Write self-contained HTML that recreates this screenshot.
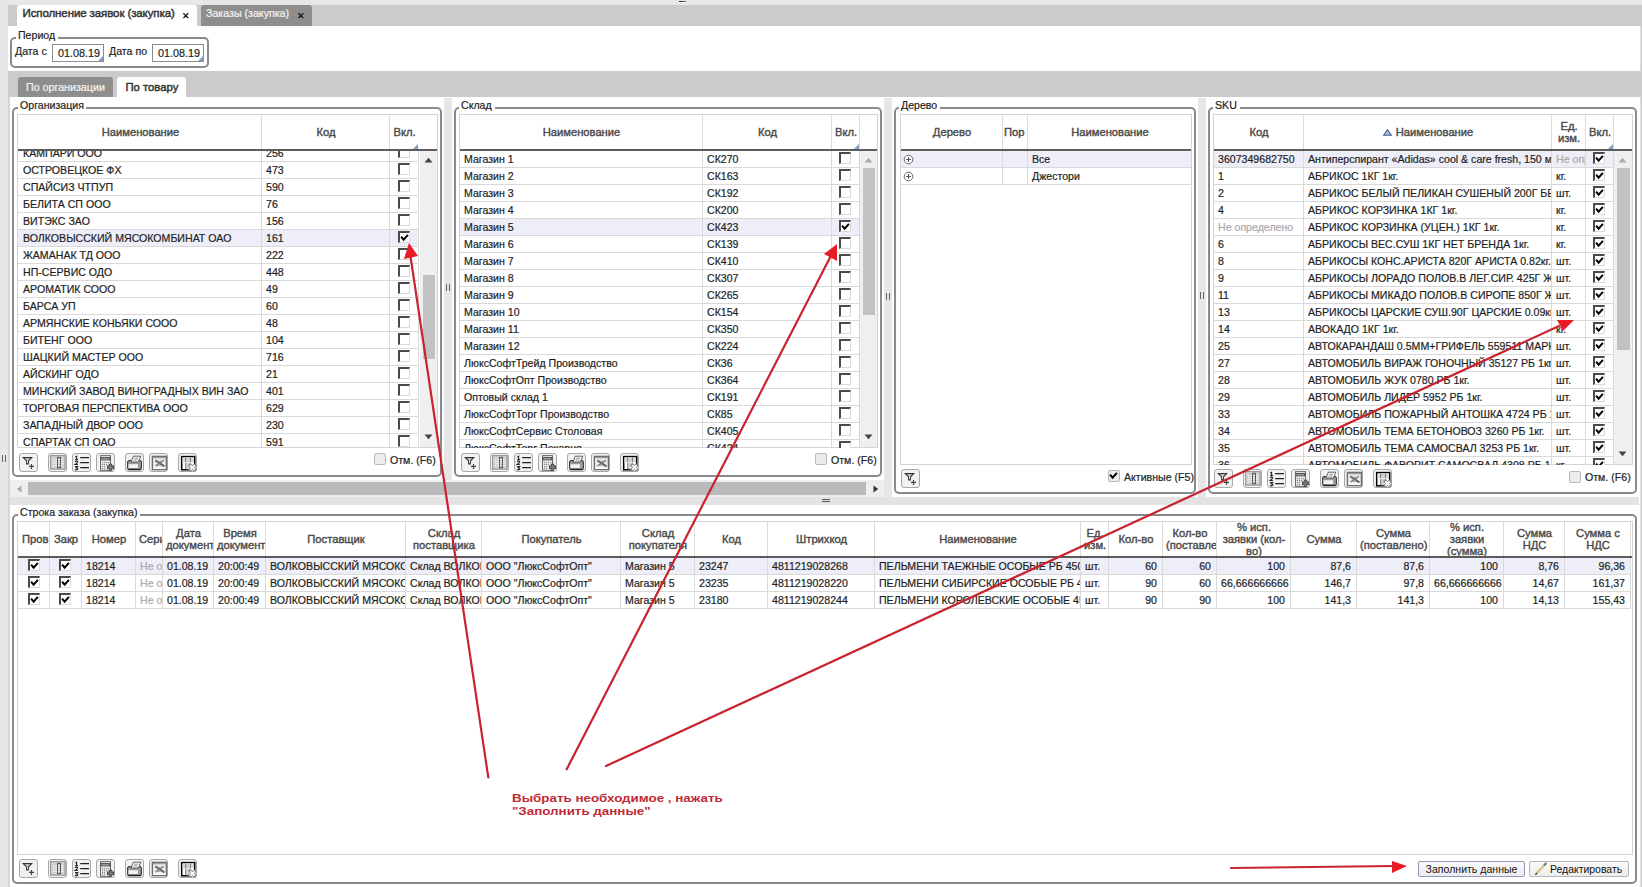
<!DOCTYPE html>
<html><head><meta charset="utf-8"><title>UI</title><style>
*{margin:0;padding:0;box-sizing:border-box}
html,body{width:1642px;height:887px;overflow:hidden;background:#fff;font-family:"Liberation Sans",sans-serif;font-size:10.6px;color:#1e1e1e;position:relative}
.c,.t,.lg{-webkit-text-stroke:0.2px currentColor}
.a{position:absolute}
.t{white-space:nowrap}
.c{white-space:nowrap;overflow:hidden;padding:0 5px;line-height:16px}
.tab1{background:#fff;border-radius:3px 3px 0 0}
.tab2{background:#8e8e8e;border-radius:3px 3px 0 0}
.x{font-size:9px;font-weight:bold;color:#111;line-height:9px;margin-top:1px}
.fs{border:2px solid #8a8a8a;border-radius:5px}
.lg{background:#fff;font-size:10.6px;line-height:12px;padding-left:2px;white-space:nowrap;color:#1e1e1e}
.inp{border:1px solid #8d8d8d;background:#fff}
.inp:after{content:"";position:absolute;right:0;bottom:0;border-style:solid;border-width:0 0 5px 5px;border-color:transparent transparent #7e9fc4 transparent}
.grid{border:1px solid #d4d4d4;background:#fff}
.hd{display:flex;align-items:center;justify-content:center;overflow:hidden}
.hdi{font-weight:normal;font-size:11.2px;-webkit-text-stroke:0.4px #4a4a4a;color:#4a4a4a;text-align:center;line-height:12px;white-space:nowrap;padding:0 2px 0 4px;width:100%;overflow:hidden}
.tri{position:absolute;right:0;bottom:0;border-style:solid;border-width:0 0 5px 5px;border-color:transparent transparent #7e9fc4 transparent}
.sort{display:inline-block;width:9px;height:7px;margin-right:4px;vertical-align:0px}
.cb{width:12px;height:12px;border-top:2px solid #4a4a4a;border-left:2px solid #4a4a4a;border-right:1px solid #dadada;border-bottom:1px solid #dadada;background:#fff}
.fcb{width:12px;height:12px;border:1px solid #b8b8b8;border-radius:2px;background:#ececec}
.tb{width:19px;height:19px;border:1px solid #a8a8a8;border-radius:3px;background:#f1f1f1;line-height:0}
.tb svg{position:absolute;left:-1px;top:-1px}
.hdl{width:4px;height:7px;border-left:1px solid #666;border-right:1px solid #666}
.btn1{border:1px solid #8d9bb8;border-radius:2px;background:linear-gradient(#fafafa,#ececf0);text-align:center;line-height:14px;font-size:10.55px;color:#111}
.btn2{border:1px solid #b5b5b5;border-radius:2px;background:linear-gradient(#fafafa,#ededed);line-height:14px;font-size:10.45px;color:#111}
</style></head><body>
<div class="a" style="left:0px;top:0px;width:1642px;height:5px;background:#e7e7e7"></div>
<div class="a" style="left:0px;top:0px;width:8px;height:887px;background:#e7e7e7"></div>
<div class="a" style="left:8px;top:5px;width:1634px;height:21px;background:#cbcbcb"></div>
<div class="a" style="left:8px;top:71px;width:1634px;height:26px;background:#cbcbcb"></div>
<div class="a" style="left:8px;top:97px;width:2px;height:790px;background:#d6d6d6"></div>
<div class="a" style="left:1640px;top:26px;width:1px;height:45px;background:#e2e2e2"></div>
<div class="a" style="left:1641px;top:26px;width:1px;height:45px;background:#c9c9c9"></div>
<div class="a" style="left:1640px;top:97px;width:1px;height:790px;background:#e2e2e2"></div>
<div class="a" style="left:1641px;top:97px;width:1px;height:790px;background:#c9c9c9"></div>
<div class="a" style="left:679px;top:1px;width:7px;height:1px;background:linear-gradient(90deg,#222,#777)"></div>
<div class="a" style="left:679px;top:2px;width:7px;height:1px;background:#fff"></div>
<div class="a tab1" style="left:17px;top:5px;width:180px;height:21px"></div>
<div class="a t" style="left:22.5px;top:7px;font-size:11.5px;font-weight:normal;color:#333;-webkit-text-stroke:0.45px #333;letter-spacing:-0.1px">Исполнение заявок (закупка)</div>
<div class="a x" style="left:182px;top:11px">✕</div>
<div class="a tab2" style="left:201px;top:5px;width:111px;height:21px"></div>
<div class="a t" style="left:206px;top:7px;font-size:10.65px;font-weight:normal;color:#f4f4f4;">Заказы (закупка)</div>
<div class="a x" style="left:297px;top:11px">✕</div>
<div class="a fs" style="left:10px;top:37px;width:199px;height:31px"></div>
<div class="a lg" style="left:16px;top:29px;width:42px;">Период</div>
<div class="a t" style="left:15px;top:45px;font-size:10.6px;font-weight:normal;color:#1e1e1e;">Дата с</div>
<div class="a inp" style="left:52px;top:44px;width:52px;height:18px"></div>
<div class="a t" style="left:58px;top:46.5px;font-size:10.8px;font-weight:normal;color:#1e1e1e;">01.08.19</div>
<div class="a t" style="left:109px;top:45px;font-size:10.6px;font-weight:normal;color:#1e1e1e;">Дата по</div>
<div class="a inp" style="left:152px;top:44px;width:52px;height:18px"></div>
<div class="a t" style="left:158px;top:46.5px;font-size:10.8px;font-weight:normal;color:#1e1e1e;">01.08.19</div>
<div class="a tab2" style="left:18px;top:77px;width:95px;height:20px"></div>
<div class="a t" style="left:26px;top:81px;font-size:10.7px;font-weight:normal;color:#f4f4f4;">По организации</div>
<div class="a tab1" style="left:117px;top:77px;width:69px;height:20px"></div>
<div class="a t" style="left:125.5px;top:81px;font-size:11.3px;font-weight:normal;color:#333;-webkit-text-stroke:0.45px #333">По товару</div>
<div class="a" style="left:444px;top:98px;width:8px;height:382px;background:#e6e6e6"></div>
<div class="a" style="left:884px;top:98px;width:8px;height:399px;background:#e6e6e6"></div>
<div class="a" style="left:1198px;top:98px;width:8px;height:399px;background:#e6e6e6"></div>
<div class="a" style="left:10px;top:497px;width:1629px;height:8px;background:#e3e3e3"></div>
<div class="a" style="left:10px;top:480px;width:874px;height:17px;background:#eeeeee"></div>
<div class="a" style="left:28px;top:482px;width:838px;height:13px;background:#bababa"></div>
<div class="a" style="left:16px;top:485px;line-height:0"><svg width="6" height="8"><path d="M5.5 0.5 L0.8 4 L5.5 7.5Z" fill="#aaa"/></svg></div>
<div class="a" style="left:873px;top:485px;line-height:0"><svg width="6" height="8"><path d="M0.5 0.5 L5.2 4 L0.5 7.5Z" fill="#333"/></svg></div>
<div class="a hdl" style="left:2px;top:455px"></div>
<div class="a hdl" style="left:446px;top:284px"></div>
<div class="a hdl" style="left:886px;top:293px"></div>
<div class="a hdl" style="left:1200px;top:292px"></div>
<div class="a" style="left:822px;top:499px;width:8px;height:1px;background:#555"></div><div class="a" style="left:822px;top:501px;width:8px;height:1px;background:#555"></div>
<div class="a fs" style="left:12px;top:107px;width:430px;height:370px"></div>
<div class="a lg" style="left:18px;top:99px;width:68px;">Организация</div>
<div class="a grid" style="left:17px;top:114px;width:421px;height:334px"></div>
<div class="a" style="left:261px;top:115px;width:1px;height:34px;background:#dcdcdc"></div>
<div class="a hd" style="left:18px;top:115px;width:243px;height:34px;"><div class="hdi" style="line-height:12px">Наименование</div></div>
<div class="a" style="left:389px;top:115px;width:1px;height:34px;background:#dcdcdc"></div>
<div class="a hd" style="left:261px;top:115px;width:128px;height:34px;"><div class="hdi" style="line-height:12px">Код</div></div>
<div class="a" style="left:418px;top:115px;width:1px;height:34px;background:#dcdcdc"></div>
<div class="a hd" style="left:389px;top:115px;width:29px;height:34px;"><div class="hdi" style="line-height:12px">Вкл.<span class='tri'></span></div></div>
<div class="a" style="left:18px;top:151px;width:419px;height:297px;overflow:hidden">
<div class="a" style="left:0;top:-6px;width:400px;height:17px;border-bottom:1px solid #d9d9d9;"></div>
<div class="a c" style="left:0px;top:-6px;width:243px;height:16px;text-align:left;color:#1e1e1e">КАМПАРИ ООО</div>
<div class="a c" style="left:243px;top:-6px;width:128px;height:16px;text-align:left;color:#1e1e1e">256</div>
<div class="a cb" style="left:380px;top:-5px"></div>
<div class="a" style="left:243px;top:-6px;width:1px;height:17px;background:#d9d9d9"></div>
<div class="a" style="left:371px;top:-6px;width:1px;height:17px;background:#d9d9d9"></div>
<div class="a" style="left:400px;top:-6px;width:1px;height:17px;background:#d9d9d9"></div>
<div class="a" style="left:0;top:11px;width:400px;height:17px;border-bottom:1px solid #d9d9d9;"></div>
<div class="a c" style="left:0px;top:11px;width:243px;height:16px;text-align:left;color:#1e1e1e">ОСТРОВЕЦКОЕ ФХ</div>
<div class="a c" style="left:243px;top:11px;width:128px;height:16px;text-align:left;color:#1e1e1e">473</div>
<div class="a cb" style="left:380px;top:12px"></div>
<div class="a" style="left:243px;top:11px;width:1px;height:17px;background:#d9d9d9"></div>
<div class="a" style="left:371px;top:11px;width:1px;height:17px;background:#d9d9d9"></div>
<div class="a" style="left:400px;top:11px;width:1px;height:17px;background:#d9d9d9"></div>
<div class="a" style="left:0;top:28px;width:400px;height:17px;border-bottom:1px solid #d9d9d9;"></div>
<div class="a c" style="left:0px;top:28px;width:243px;height:16px;text-align:left;color:#1e1e1e">СПАЙСИЗ ЧТПУП</div>
<div class="a c" style="left:243px;top:28px;width:128px;height:16px;text-align:left;color:#1e1e1e">590</div>
<div class="a cb" style="left:380px;top:29px"></div>
<div class="a" style="left:243px;top:28px;width:1px;height:17px;background:#d9d9d9"></div>
<div class="a" style="left:371px;top:28px;width:1px;height:17px;background:#d9d9d9"></div>
<div class="a" style="left:400px;top:28px;width:1px;height:17px;background:#d9d9d9"></div>
<div class="a" style="left:0;top:45px;width:400px;height:17px;border-bottom:1px solid #d9d9d9;"></div>
<div class="a c" style="left:0px;top:45px;width:243px;height:16px;text-align:left;color:#1e1e1e">БЕЛИТА СП ООО</div>
<div class="a c" style="left:243px;top:45px;width:128px;height:16px;text-align:left;color:#1e1e1e">76</div>
<div class="a cb" style="left:380px;top:46px"></div>
<div class="a" style="left:243px;top:45px;width:1px;height:17px;background:#d9d9d9"></div>
<div class="a" style="left:371px;top:45px;width:1px;height:17px;background:#d9d9d9"></div>
<div class="a" style="left:400px;top:45px;width:1px;height:17px;background:#d9d9d9"></div>
<div class="a" style="left:0;top:62px;width:400px;height:17px;border-bottom:1px solid #d9d9d9;"></div>
<div class="a c" style="left:0px;top:62px;width:243px;height:16px;text-align:left;color:#1e1e1e">ВИТЭКС ЗАО</div>
<div class="a c" style="left:243px;top:62px;width:128px;height:16px;text-align:left;color:#1e1e1e">156</div>
<div class="a cb" style="left:380px;top:63px"></div>
<div class="a" style="left:243px;top:62px;width:1px;height:17px;background:#d9d9d9"></div>
<div class="a" style="left:371px;top:62px;width:1px;height:17px;background:#d9d9d9"></div>
<div class="a" style="left:400px;top:62px;width:1px;height:17px;background:#d9d9d9"></div>
<div class="a" style="left:0;top:79px;width:400px;height:17px;border-bottom:1px solid #d9d9d9;background:#eeeef9;"></div>
<div class="a c" style="left:0px;top:79px;width:243px;height:16px;text-align:left;color:#1e1e1e">ВОЛКОВЫССКИЙ МЯСОКОМБИНАТ ОАО</div>
<div class="a c" style="left:243px;top:79px;width:128px;height:16px;text-align:left;color:#1e1e1e">161</div>
<div class="a cb" style="left:380px;top:80px"><svg width="9" height="9" viewBox="0 0 9 9" style="position:absolute;left:0px;top:0px;overflow:visible"><path d="M1.1 3.7 L3.6 6.7 L7.9 1.9" stroke="#000" stroke-width="2" fill="none"/></svg></div>
<div class="a" style="left:243px;top:79px;width:1px;height:17px;background:#d9d9d9"></div>
<div class="a" style="left:371px;top:79px;width:1px;height:17px;background:#d9d9d9"></div>
<div class="a" style="left:400px;top:79px;width:1px;height:17px;background:#d9d9d9"></div>
<div class="a" style="left:0;top:96px;width:400px;height:17px;border-bottom:1px solid #d9d9d9;"></div>
<div class="a c" style="left:0px;top:96px;width:243px;height:16px;text-align:left;color:#1e1e1e">ЖАМАНАК ТД ООО</div>
<div class="a c" style="left:243px;top:96px;width:128px;height:16px;text-align:left;color:#1e1e1e">222</div>
<div class="a cb" style="left:380px;top:97px"></div>
<div class="a" style="left:243px;top:96px;width:1px;height:17px;background:#d9d9d9"></div>
<div class="a" style="left:371px;top:96px;width:1px;height:17px;background:#d9d9d9"></div>
<div class="a" style="left:400px;top:96px;width:1px;height:17px;background:#d9d9d9"></div>
<div class="a" style="left:0;top:113px;width:400px;height:17px;border-bottom:1px solid #d9d9d9;"></div>
<div class="a c" style="left:0px;top:113px;width:243px;height:16px;text-align:left;color:#1e1e1e">НП-СЕРВИС ОДО</div>
<div class="a c" style="left:243px;top:113px;width:128px;height:16px;text-align:left;color:#1e1e1e">448</div>
<div class="a cb" style="left:380px;top:114px"></div>
<div class="a" style="left:243px;top:113px;width:1px;height:17px;background:#d9d9d9"></div>
<div class="a" style="left:371px;top:113px;width:1px;height:17px;background:#d9d9d9"></div>
<div class="a" style="left:400px;top:113px;width:1px;height:17px;background:#d9d9d9"></div>
<div class="a" style="left:0;top:130px;width:400px;height:17px;border-bottom:1px solid #d9d9d9;"></div>
<div class="a c" style="left:0px;top:130px;width:243px;height:16px;text-align:left;color:#1e1e1e">АРОМАТИК СООО</div>
<div class="a c" style="left:243px;top:130px;width:128px;height:16px;text-align:left;color:#1e1e1e">49</div>
<div class="a cb" style="left:380px;top:131px"></div>
<div class="a" style="left:243px;top:130px;width:1px;height:17px;background:#d9d9d9"></div>
<div class="a" style="left:371px;top:130px;width:1px;height:17px;background:#d9d9d9"></div>
<div class="a" style="left:400px;top:130px;width:1px;height:17px;background:#d9d9d9"></div>
<div class="a" style="left:0;top:147px;width:400px;height:17px;border-bottom:1px solid #d9d9d9;"></div>
<div class="a c" style="left:0px;top:147px;width:243px;height:16px;text-align:left;color:#1e1e1e">БАРСА УП</div>
<div class="a c" style="left:243px;top:147px;width:128px;height:16px;text-align:left;color:#1e1e1e">60</div>
<div class="a cb" style="left:380px;top:148px"></div>
<div class="a" style="left:243px;top:147px;width:1px;height:17px;background:#d9d9d9"></div>
<div class="a" style="left:371px;top:147px;width:1px;height:17px;background:#d9d9d9"></div>
<div class="a" style="left:400px;top:147px;width:1px;height:17px;background:#d9d9d9"></div>
<div class="a" style="left:0;top:164px;width:400px;height:17px;border-bottom:1px solid #d9d9d9;"></div>
<div class="a c" style="left:0px;top:164px;width:243px;height:16px;text-align:left;color:#1e1e1e">АРМЯНСКИЕ КОНЬЯКИ СООО</div>
<div class="a c" style="left:243px;top:164px;width:128px;height:16px;text-align:left;color:#1e1e1e">48</div>
<div class="a cb" style="left:380px;top:165px"></div>
<div class="a" style="left:243px;top:164px;width:1px;height:17px;background:#d9d9d9"></div>
<div class="a" style="left:371px;top:164px;width:1px;height:17px;background:#d9d9d9"></div>
<div class="a" style="left:400px;top:164px;width:1px;height:17px;background:#d9d9d9"></div>
<div class="a" style="left:0;top:181px;width:400px;height:17px;border-bottom:1px solid #d9d9d9;"></div>
<div class="a c" style="left:0px;top:181px;width:243px;height:16px;text-align:left;color:#1e1e1e">БИТЕНГ ООО</div>
<div class="a c" style="left:243px;top:181px;width:128px;height:16px;text-align:left;color:#1e1e1e">104</div>
<div class="a cb" style="left:380px;top:182px"></div>
<div class="a" style="left:243px;top:181px;width:1px;height:17px;background:#d9d9d9"></div>
<div class="a" style="left:371px;top:181px;width:1px;height:17px;background:#d9d9d9"></div>
<div class="a" style="left:400px;top:181px;width:1px;height:17px;background:#d9d9d9"></div>
<div class="a" style="left:0;top:198px;width:400px;height:17px;border-bottom:1px solid #d9d9d9;"></div>
<div class="a c" style="left:0px;top:198px;width:243px;height:16px;text-align:left;color:#1e1e1e">ШАЦКИЙ МАСТЕР ООО</div>
<div class="a c" style="left:243px;top:198px;width:128px;height:16px;text-align:left;color:#1e1e1e">716</div>
<div class="a cb" style="left:380px;top:199px"></div>
<div class="a" style="left:243px;top:198px;width:1px;height:17px;background:#d9d9d9"></div>
<div class="a" style="left:371px;top:198px;width:1px;height:17px;background:#d9d9d9"></div>
<div class="a" style="left:400px;top:198px;width:1px;height:17px;background:#d9d9d9"></div>
<div class="a" style="left:0;top:215px;width:400px;height:17px;border-bottom:1px solid #d9d9d9;"></div>
<div class="a c" style="left:0px;top:215px;width:243px;height:16px;text-align:left;color:#1e1e1e">АЙСКИНГ ОДО</div>
<div class="a c" style="left:243px;top:215px;width:128px;height:16px;text-align:left;color:#1e1e1e">21</div>
<div class="a cb" style="left:380px;top:216px"></div>
<div class="a" style="left:243px;top:215px;width:1px;height:17px;background:#d9d9d9"></div>
<div class="a" style="left:371px;top:215px;width:1px;height:17px;background:#d9d9d9"></div>
<div class="a" style="left:400px;top:215px;width:1px;height:17px;background:#d9d9d9"></div>
<div class="a" style="left:0;top:232px;width:400px;height:17px;border-bottom:1px solid #d9d9d9;"></div>
<div class="a c" style="left:0px;top:232px;width:243px;height:16px;text-align:left;color:#1e1e1e">МИНСКИЙ ЗАВОД ВИНОГРАДНЫХ ВИН ЗАО</div>
<div class="a c" style="left:243px;top:232px;width:128px;height:16px;text-align:left;color:#1e1e1e">401</div>
<div class="a cb" style="left:380px;top:233px"></div>
<div class="a" style="left:243px;top:232px;width:1px;height:17px;background:#d9d9d9"></div>
<div class="a" style="left:371px;top:232px;width:1px;height:17px;background:#d9d9d9"></div>
<div class="a" style="left:400px;top:232px;width:1px;height:17px;background:#d9d9d9"></div>
<div class="a" style="left:0;top:249px;width:400px;height:17px;border-bottom:1px solid #d9d9d9;"></div>
<div class="a c" style="left:0px;top:249px;width:243px;height:16px;text-align:left;color:#1e1e1e">ТОРГОВАЯ ПЕРСПЕКТИВА ООО</div>
<div class="a c" style="left:243px;top:249px;width:128px;height:16px;text-align:left;color:#1e1e1e">629</div>
<div class="a cb" style="left:380px;top:250px"></div>
<div class="a" style="left:243px;top:249px;width:1px;height:17px;background:#d9d9d9"></div>
<div class="a" style="left:371px;top:249px;width:1px;height:17px;background:#d9d9d9"></div>
<div class="a" style="left:400px;top:249px;width:1px;height:17px;background:#d9d9d9"></div>
<div class="a" style="left:0;top:266px;width:400px;height:17px;border-bottom:1px solid #d9d9d9;"></div>
<div class="a c" style="left:0px;top:266px;width:243px;height:16px;text-align:left;color:#1e1e1e">ЗАПАДНЫЙ ДВОР ООО</div>
<div class="a c" style="left:243px;top:266px;width:128px;height:16px;text-align:left;color:#1e1e1e">230</div>
<div class="a cb" style="left:380px;top:267px"></div>
<div class="a" style="left:243px;top:266px;width:1px;height:17px;background:#d9d9d9"></div>
<div class="a" style="left:371px;top:266px;width:1px;height:17px;background:#d9d9d9"></div>
<div class="a" style="left:400px;top:266px;width:1px;height:17px;background:#d9d9d9"></div>
<div class="a" style="left:0;top:283px;width:400px;height:17px;border-bottom:1px solid #d9d9d9;"></div>
<div class="a c" style="left:0px;top:283px;width:243px;height:16px;text-align:left;color:#1e1e1e">СПАРТАК СП ОАО</div>
<div class="a c" style="left:243px;top:283px;width:128px;height:16px;text-align:left;color:#1e1e1e">591</div>
<div class="a cb" style="left:380px;top:284px"></div>
<div class="a" style="left:243px;top:283px;width:1px;height:17px;background:#d9d9d9"></div>
<div class="a" style="left:371px;top:283px;width:1px;height:17px;background:#d9d9d9"></div>
<div class="a" style="left:400px;top:283px;width:1px;height:17px;background:#d9d9d9"></div>
<div class="a" style="left:0;top:300px;width:400px;height:17px;border-bottom:1px solid #d9d9d9;"></div>
<div class="a cb" style="left:380px;top:301px"></div>
<div class="a" style="left:243px;top:300px;width:1px;height:17px;background:#d9d9d9"></div>
<div class="a" style="left:371px;top:300px;width:1px;height:17px;background:#d9d9d9"></div>
<div class="a" style="left:400px;top:300px;width:1px;height:17px;background:#d9d9d9"></div>
</div>
<div class="a" style="left:18px;top:149px;width:419px;height:2px;background:#5c5c5c"></div>
<div class="a" style="left:418px;top:115px;width:19px;height:34px;background:#fff"></div>
<div class="a" style="left:420px;top:151px;width:17px;height:296px;background:#efefef"></div>
<div class="a" style="left:424px;top:157px;line-height:0"><svg width="9" height="6" viewBox="0 0 9 6"><path d="M0.5 5.5 L4.5 0.8 L8.5 5.5 Z" fill="#444"/></svg></div>
<div class="a" style="left:424px;top:434px;line-height:0"><svg width="9" height="6" viewBox="0 0 9 6"><path d="M0.5 0.5 L4.5 5.2 L8.5 0.5 Z" fill="#444"/></svg></div>
<div class="a" style="left:423px;top:275px;width:12px;height:84px;background:#c2c2c2"></div>
<div class="a tb" style="left:19px;top:453px"><svg width="19" height="20" viewBox="0 0 19 20"><path d="M3 4 H14 L9.9 8.3 V11.6 H7.1 V8.3 Z" fill="#333"/><path d="M5.6 5.2 H11.4 L9 7.6 V10.2 H8 V7.6 Z" fill="#c9d6d6"/><path d="M12.5 11 V15.9 M10 13.4 H15" stroke="#444" stroke-width="1.2"/></svg></div>
<div class="a tb" style="left:48px;top:453px"><svg width="19" height="20" viewBox="0 0 19 20"><rect x="2.8" y="2.8" width="14.2" height="13.2" fill="#fff" stroke="#8a8a8a" stroke-width="1.3"/><rect x="4.2" y="4.2" width="11.6" height="10.6" fill="#c8c8c8"/><g fill="#f4f4f4"><rect x="5" y="6" width="1.6" height="1.2"/><rect x="7.2" y="6" width="1.8" height="1.2"/><rect x="10" y="6" width="1.8" height="1.2"/><rect x="12.6" y="6" width="2.4" height="1.2"/><rect x="5" y="8" width="1.6" height="1.2"/><rect x="7.2" y="8" width="1.8" height="1.2"/><rect x="10" y="8" width="1.8" height="1.2"/><rect x="12.6" y="8" width="2.4" height="1.2"/><rect x="5" y="10" width="1.6" height="1.2"/><rect x="7.2" y="10" width="1.8" height="1.2"/><rect x="10" y="10" width="1.8" height="1.2"/><rect x="12.6" y="10" width="2.4" height="1.2"/><rect x="5" y="12" width="1.6" height="1.2"/><rect x="7.2" y="12" width="1.8" height="1.2"/><rect x="10" y="12" width="1.8" height="1.2"/><rect x="12.6" y="12" width="2.4" height="1.2"/></g><rect x="9.6" y="4.3" width="2.8" height="10.4" fill="none" stroke="#444" stroke-width="0.9"/></svg></div>
<div class="a tb" style="left:72px;top:453px"><svg width="19" height="20" viewBox="0 0 19 20"><path d="M3.4 4 L4.6 3.2 V6.6 M3.2 6.6 H5.9" stroke="#222" stroke-width="1.1" fill="none"/><path d="M3 8.6 Q4.5 7.6 5.6 8.6 Q5.8 9.8 3.2 11.5 H5.9" stroke="#222" stroke-width="1.1" fill="none"/><path d="M3 13.5 H5.6 L4.2 14.8 Q6 15 5.7 16.2 Q4.6 17.4 3 16.5" stroke="#222" stroke-width="1.1" fill="none"/><path d="M8.2 4.6 H17 M8.2 9.6 H17 M8.2 14.6 H17" stroke="#222" stroke-width="1.2"/></svg></div>
<div class="a tb" style="left:96px;top:453px"><svg width="19" height="20" viewBox="0 0 19 20"><rect x="4.5" y="2.6" width="10" height="14.8" fill="#ececec" stroke="#6a6a6a" stroke-width="1"/><rect x="4.5" y="4" width="10" height="3.4" fill="#555"/><rect x="5.5" y="5" width="7.5" height="1.6" fill="#9a9a9a"/><g fill="#8a8a8a"><rect x="5.9" y="9" width="1.2" height="1.2"/><rect x="7.9" y="9" width="1.2" height="1.2"/><rect x="9.9" y="9" width="1.2" height="1.2"/><rect x="11.9" y="9" width="1.2" height="1.2"/><rect x="5.9" y="11" width="1.2" height="1.2"/><rect x="7.9" y="11" width="1.2" height="1.2"/><rect x="9.9" y="11" width="1.2" height="1.2"/><rect x="5.9" y="13" width="1.2" height="1.2"/><rect x="7.9" y="13" width="1.2" height="1.2"/><rect x="5.9" y="15" width="1.2" height="1.2"/><rect x="7.9" y="15" width="1.2" height="1.2"/></g><path d="M14.5 10.8 V17.8 M11 14.3 H18" stroke="#444" stroke-width="3.4"/><path d="M14.5 11.5 V17.1 M11.7 14.3 H17.3" stroke="#7a7a7a" stroke-width="1.8"/></svg></div>
<div class="a tb" style="left:125px;top:453px"><svg width="19" height="20" viewBox="0 0 19 20"><path d="M2.6 9 Q2.6 7.6 4 7.6 H15 Q16.4 7.6 16.4 9 V15.6 Q16.4 16.8 15 16.8 H4 Q2.6 16.8 2.6 15.6 Z" fill="#9a9a9a" stroke="#333" stroke-width="1"/><path d="M6 9 L8.3 3.2 H15.8 L13.4 9 Z" fill="#f4f4f4" stroke="#555" stroke-width="0.9"/><path d="M9.3 5.3 H13 M8.6 7 H12.2" stroke="#888" stroke-width="0.8"/><rect x="3.5" y="11.2" width="9.5" height="3.8" fill="#f2f2f2"/><path d="M3.2 16.4 H15.8" stroke="#222" stroke-width="1.2"/></svg></div>
<div class="a tb" style="left:149px;top:453px"><svg width="19" height="20" viewBox="0 0 19 20"><rect x="3.4" y="3.4" width="14" height="13.2" fill="#eeeeee" stroke="#6e6e6e" stroke-width="1.4"/><rect x="4.1" y="4.1" width="12.6" height="1.2" fill="#9a9a9a"/><path d="M6.3 7.4 L15.4 13.4" stroke="#666" stroke-width="2"/><path d="M14.8 7.3 L6.6 12.8" stroke="#777" stroke-width="1.4"/><path d="M7.5 8.2 H13.5 M6.5 12.4 H11.5" stroke="#999" stroke-width="0.8"/><rect x="4.1" y="14.6" width="12.6" height="1.3" fill="#fff"/></svg></div>
<div class="a tb" style="left:178px;top:453px"><svg width="19" height="20" viewBox="0 0 19 20"><rect x="3.7" y="3.6" width="13" height="13.2" fill="#fff" stroke="#000" stroke-width="1.5"/><rect x="4.5" y="4.4" width="11.5" height="5" fill="#d8d8d8"/><rect x="8" y="4.4" width="4.4" height="11.8" fill="#cfcfcf"/><path d="M7.6 4.4 V16.2 M12.5 4.4 V16.2" stroke="#777" stroke-width="0.9"/><path d="M4.5 9.6 H16" stroke="#eee" stroke-width="0.8"/><rect x="11" y="11" width="7" height="7" fill="#fff"/><path d="M12.2 12.2 L16.8 16.8 M16.8 12.2 L12.2 16.8" stroke="#8a8a8a" stroke-width="3.4" stroke-linecap="round"/><path d="M12.3 12.3 L16.7 16.7 M16.7 12.3 L12.3 16.7" stroke="#fff" stroke-width="1.8"/></svg></div>
<div class="a fcb" style="left:374px;top:453px"></div>
<div class="a t" style="left:390px;top:454px;font-size:10.6px;font-weight:normal;color:#1e1e1e;">Отм. (F6)</div>
<div class="a fs" style="left:454px;top:107px;width:428px;height:370px"></div>
<div class="a lg" style="left:459px;top:99px;width:36px;">Склад</div>
<div class="a grid" style="left:459px;top:114px;width:419px;height:334px"></div>
<div class="a" style="left:702px;top:115px;width:1px;height:34px;background:#dcdcdc"></div>
<div class="a hd" style="left:459px;top:115px;width:243px;height:34px;"><div class="hdi" style="line-height:12px">Наименование</div></div>
<div class="a" style="left:831px;top:115px;width:1px;height:34px;background:#dcdcdc"></div>
<div class="a hd" style="left:702px;top:115px;width:129px;height:34px;"><div class="hdi" style="line-height:12px">Код</div></div>
<div class="a" style="left:859px;top:115px;width:1px;height:34px;background:#dcdcdc"></div>
<div class="a hd" style="left:831px;top:115px;width:28px;height:34px;"><div class="hdi" style="line-height:12px">Вкл.<span class='tri'></span></div></div>
<div class="a" style="left:460px;top:151px;width:417px;height:297px;overflow:hidden">
<div class="a" style="left:0;top:0px;width:399px;height:17px;border-bottom:1px solid #d9d9d9;"></div>
<div class="a c" style="left:-1px;top:0px;width:243px;height:16px;text-align:left;color:#1e1e1e">Магазин 1</div>
<div class="a c" style="left:242px;top:0px;width:129px;height:16px;text-align:left;color:#1e1e1e">СК270</div>
<div class="a cb" style="left:379px;top:1px"></div>
<div class="a" style="left:242px;top:0px;width:1px;height:17px;background:#d9d9d9"></div>
<div class="a" style="left:371px;top:0px;width:1px;height:17px;background:#d9d9d9"></div>
<div class="a" style="left:399px;top:0px;width:1px;height:17px;background:#d9d9d9"></div>
<div class="a" style="left:0;top:17px;width:399px;height:17px;border-bottom:1px solid #d9d9d9;"></div>
<div class="a c" style="left:-1px;top:17px;width:243px;height:16px;text-align:left;color:#1e1e1e">Магазин 2</div>
<div class="a c" style="left:242px;top:17px;width:129px;height:16px;text-align:left;color:#1e1e1e">СК163</div>
<div class="a cb" style="left:379px;top:18px"></div>
<div class="a" style="left:242px;top:17px;width:1px;height:17px;background:#d9d9d9"></div>
<div class="a" style="left:371px;top:17px;width:1px;height:17px;background:#d9d9d9"></div>
<div class="a" style="left:399px;top:17px;width:1px;height:17px;background:#d9d9d9"></div>
<div class="a" style="left:0;top:34px;width:399px;height:17px;border-bottom:1px solid #d9d9d9;"></div>
<div class="a c" style="left:-1px;top:34px;width:243px;height:16px;text-align:left;color:#1e1e1e">Магазин 3</div>
<div class="a c" style="left:242px;top:34px;width:129px;height:16px;text-align:left;color:#1e1e1e">СК192</div>
<div class="a cb" style="left:379px;top:35px"></div>
<div class="a" style="left:242px;top:34px;width:1px;height:17px;background:#d9d9d9"></div>
<div class="a" style="left:371px;top:34px;width:1px;height:17px;background:#d9d9d9"></div>
<div class="a" style="left:399px;top:34px;width:1px;height:17px;background:#d9d9d9"></div>
<div class="a" style="left:0;top:51px;width:399px;height:17px;border-bottom:1px solid #d9d9d9;"></div>
<div class="a c" style="left:-1px;top:51px;width:243px;height:16px;text-align:left;color:#1e1e1e">Магазин 4</div>
<div class="a c" style="left:242px;top:51px;width:129px;height:16px;text-align:left;color:#1e1e1e">СК200</div>
<div class="a cb" style="left:379px;top:52px"></div>
<div class="a" style="left:242px;top:51px;width:1px;height:17px;background:#d9d9d9"></div>
<div class="a" style="left:371px;top:51px;width:1px;height:17px;background:#d9d9d9"></div>
<div class="a" style="left:399px;top:51px;width:1px;height:17px;background:#d9d9d9"></div>
<div class="a" style="left:0;top:68px;width:399px;height:17px;border-bottom:1px solid #d9d9d9;background:#eeeef9;"></div>
<div class="a c" style="left:-1px;top:68px;width:243px;height:16px;text-align:left;color:#1e1e1e">Магазин 5</div>
<div class="a c" style="left:242px;top:68px;width:129px;height:16px;text-align:left;color:#1e1e1e">СК423</div>
<div class="a cb" style="left:379px;top:69px"><svg width="9" height="9" viewBox="0 0 9 9" style="position:absolute;left:0px;top:0px;overflow:visible"><path d="M1.1 3.7 L3.6 6.7 L7.9 1.9" stroke="#000" stroke-width="2" fill="none"/></svg></div>
<div class="a" style="left:242px;top:68px;width:1px;height:17px;background:#d9d9d9"></div>
<div class="a" style="left:371px;top:68px;width:1px;height:17px;background:#d9d9d9"></div>
<div class="a" style="left:399px;top:68px;width:1px;height:17px;background:#d9d9d9"></div>
<div class="a" style="left:0;top:85px;width:399px;height:17px;border-bottom:1px solid #d9d9d9;"></div>
<div class="a c" style="left:-1px;top:85px;width:243px;height:16px;text-align:left;color:#1e1e1e">Магазин 6</div>
<div class="a c" style="left:242px;top:85px;width:129px;height:16px;text-align:left;color:#1e1e1e">СК139</div>
<div class="a cb" style="left:379px;top:86px"></div>
<div class="a" style="left:242px;top:85px;width:1px;height:17px;background:#d9d9d9"></div>
<div class="a" style="left:371px;top:85px;width:1px;height:17px;background:#d9d9d9"></div>
<div class="a" style="left:399px;top:85px;width:1px;height:17px;background:#d9d9d9"></div>
<div class="a" style="left:0;top:102px;width:399px;height:17px;border-bottom:1px solid #d9d9d9;"></div>
<div class="a c" style="left:-1px;top:102px;width:243px;height:16px;text-align:left;color:#1e1e1e">Магазин 7</div>
<div class="a c" style="left:242px;top:102px;width:129px;height:16px;text-align:left;color:#1e1e1e">СК410</div>
<div class="a cb" style="left:379px;top:103px"></div>
<div class="a" style="left:242px;top:102px;width:1px;height:17px;background:#d9d9d9"></div>
<div class="a" style="left:371px;top:102px;width:1px;height:17px;background:#d9d9d9"></div>
<div class="a" style="left:399px;top:102px;width:1px;height:17px;background:#d9d9d9"></div>
<div class="a" style="left:0;top:119px;width:399px;height:17px;border-bottom:1px solid #d9d9d9;"></div>
<div class="a c" style="left:-1px;top:119px;width:243px;height:16px;text-align:left;color:#1e1e1e">Магазин 8</div>
<div class="a c" style="left:242px;top:119px;width:129px;height:16px;text-align:left;color:#1e1e1e">СК307</div>
<div class="a cb" style="left:379px;top:120px"></div>
<div class="a" style="left:242px;top:119px;width:1px;height:17px;background:#d9d9d9"></div>
<div class="a" style="left:371px;top:119px;width:1px;height:17px;background:#d9d9d9"></div>
<div class="a" style="left:399px;top:119px;width:1px;height:17px;background:#d9d9d9"></div>
<div class="a" style="left:0;top:136px;width:399px;height:17px;border-bottom:1px solid #d9d9d9;"></div>
<div class="a c" style="left:-1px;top:136px;width:243px;height:16px;text-align:left;color:#1e1e1e">Магазин 9</div>
<div class="a c" style="left:242px;top:136px;width:129px;height:16px;text-align:left;color:#1e1e1e">СК265</div>
<div class="a cb" style="left:379px;top:137px"></div>
<div class="a" style="left:242px;top:136px;width:1px;height:17px;background:#d9d9d9"></div>
<div class="a" style="left:371px;top:136px;width:1px;height:17px;background:#d9d9d9"></div>
<div class="a" style="left:399px;top:136px;width:1px;height:17px;background:#d9d9d9"></div>
<div class="a" style="left:0;top:153px;width:399px;height:17px;border-bottom:1px solid #d9d9d9;"></div>
<div class="a c" style="left:-1px;top:153px;width:243px;height:16px;text-align:left;color:#1e1e1e">Магазин 10</div>
<div class="a c" style="left:242px;top:153px;width:129px;height:16px;text-align:left;color:#1e1e1e">СК154</div>
<div class="a cb" style="left:379px;top:154px"></div>
<div class="a" style="left:242px;top:153px;width:1px;height:17px;background:#d9d9d9"></div>
<div class="a" style="left:371px;top:153px;width:1px;height:17px;background:#d9d9d9"></div>
<div class="a" style="left:399px;top:153px;width:1px;height:17px;background:#d9d9d9"></div>
<div class="a" style="left:0;top:170px;width:399px;height:17px;border-bottom:1px solid #d9d9d9;"></div>
<div class="a c" style="left:-1px;top:170px;width:243px;height:16px;text-align:left;color:#1e1e1e">Магазин 11</div>
<div class="a c" style="left:242px;top:170px;width:129px;height:16px;text-align:left;color:#1e1e1e">СК350</div>
<div class="a cb" style="left:379px;top:171px"></div>
<div class="a" style="left:242px;top:170px;width:1px;height:17px;background:#d9d9d9"></div>
<div class="a" style="left:371px;top:170px;width:1px;height:17px;background:#d9d9d9"></div>
<div class="a" style="left:399px;top:170px;width:1px;height:17px;background:#d9d9d9"></div>
<div class="a" style="left:0;top:187px;width:399px;height:17px;border-bottom:1px solid #d9d9d9;"></div>
<div class="a c" style="left:-1px;top:187px;width:243px;height:16px;text-align:left;color:#1e1e1e">Магазин 12</div>
<div class="a c" style="left:242px;top:187px;width:129px;height:16px;text-align:left;color:#1e1e1e">СК224</div>
<div class="a cb" style="left:379px;top:188px"></div>
<div class="a" style="left:242px;top:187px;width:1px;height:17px;background:#d9d9d9"></div>
<div class="a" style="left:371px;top:187px;width:1px;height:17px;background:#d9d9d9"></div>
<div class="a" style="left:399px;top:187px;width:1px;height:17px;background:#d9d9d9"></div>
<div class="a" style="left:0;top:204px;width:399px;height:17px;border-bottom:1px solid #d9d9d9;"></div>
<div class="a c" style="left:-1px;top:204px;width:243px;height:16px;text-align:left;color:#1e1e1e">ЛюксСофтТрейд Производство</div>
<div class="a c" style="left:242px;top:204px;width:129px;height:16px;text-align:left;color:#1e1e1e">СК36</div>
<div class="a cb" style="left:379px;top:205px"></div>
<div class="a" style="left:242px;top:204px;width:1px;height:17px;background:#d9d9d9"></div>
<div class="a" style="left:371px;top:204px;width:1px;height:17px;background:#d9d9d9"></div>
<div class="a" style="left:399px;top:204px;width:1px;height:17px;background:#d9d9d9"></div>
<div class="a" style="left:0;top:221px;width:399px;height:17px;border-bottom:1px solid #d9d9d9;"></div>
<div class="a c" style="left:-1px;top:221px;width:243px;height:16px;text-align:left;color:#1e1e1e">ЛюксСофтОпт Производство</div>
<div class="a c" style="left:242px;top:221px;width:129px;height:16px;text-align:left;color:#1e1e1e">СК364</div>
<div class="a cb" style="left:379px;top:222px"></div>
<div class="a" style="left:242px;top:221px;width:1px;height:17px;background:#d9d9d9"></div>
<div class="a" style="left:371px;top:221px;width:1px;height:17px;background:#d9d9d9"></div>
<div class="a" style="left:399px;top:221px;width:1px;height:17px;background:#d9d9d9"></div>
<div class="a" style="left:0;top:238px;width:399px;height:17px;border-bottom:1px solid #d9d9d9;"></div>
<div class="a c" style="left:-1px;top:238px;width:243px;height:16px;text-align:left;color:#1e1e1e">Оптовый склад 1</div>
<div class="a c" style="left:242px;top:238px;width:129px;height:16px;text-align:left;color:#1e1e1e">СК191</div>
<div class="a cb" style="left:379px;top:239px"></div>
<div class="a" style="left:242px;top:238px;width:1px;height:17px;background:#d9d9d9"></div>
<div class="a" style="left:371px;top:238px;width:1px;height:17px;background:#d9d9d9"></div>
<div class="a" style="left:399px;top:238px;width:1px;height:17px;background:#d9d9d9"></div>
<div class="a" style="left:0;top:255px;width:399px;height:17px;border-bottom:1px solid #d9d9d9;"></div>
<div class="a c" style="left:-1px;top:255px;width:243px;height:16px;text-align:left;color:#1e1e1e">ЛюксСофтТорг Производство</div>
<div class="a c" style="left:242px;top:255px;width:129px;height:16px;text-align:left;color:#1e1e1e">СК85</div>
<div class="a cb" style="left:379px;top:256px"></div>
<div class="a" style="left:242px;top:255px;width:1px;height:17px;background:#d9d9d9"></div>
<div class="a" style="left:371px;top:255px;width:1px;height:17px;background:#d9d9d9"></div>
<div class="a" style="left:399px;top:255px;width:1px;height:17px;background:#d9d9d9"></div>
<div class="a" style="left:0;top:272px;width:399px;height:17px;border-bottom:1px solid #d9d9d9;"></div>
<div class="a c" style="left:-1px;top:272px;width:243px;height:16px;text-align:left;color:#1e1e1e">ЛюксСофтСервис Столовая</div>
<div class="a c" style="left:242px;top:272px;width:129px;height:16px;text-align:left;color:#1e1e1e">СК405</div>
<div class="a cb" style="left:379px;top:273px"></div>
<div class="a" style="left:242px;top:272px;width:1px;height:17px;background:#d9d9d9"></div>
<div class="a" style="left:371px;top:272px;width:1px;height:17px;background:#d9d9d9"></div>
<div class="a" style="left:399px;top:272px;width:1px;height:17px;background:#d9d9d9"></div>
<div class="a" style="left:0;top:289px;width:399px;height:17px;border-bottom:1px solid #d9d9d9;"></div>
<div class="a c" style="left:-1px;top:289px;width:243px;height:16px;text-align:left;color:#1e1e1e">ЛюксСофтТорг Пекарня</div>
<div class="a c" style="left:242px;top:289px;width:129px;height:16px;text-align:left;color:#1e1e1e">СК424</div>
<div class="a cb" style="left:379px;top:290px"></div>
<div class="a" style="left:242px;top:289px;width:1px;height:17px;background:#d9d9d9"></div>
<div class="a" style="left:371px;top:289px;width:1px;height:17px;background:#d9d9d9"></div>
<div class="a" style="left:399px;top:289px;width:1px;height:17px;background:#d9d9d9"></div>
</div>
<div class="a" style="left:460px;top:149px;width:417px;height:2px;background:#5c5c5c"></div>
<div class="a" style="left:860px;top:151px;width:17px;height:296px;background:#efefef"></div>
<div class="a" style="left:864px;top:157px;line-height:0"><svg width="9" height="6" viewBox="0 0 9 6"><path d="M0.5 5.5 L4.5 0.8 L8.5 5.5 Z" fill="#aaa"/></svg></div>
<div class="a" style="left:864px;top:434px;line-height:0"><svg width="9" height="6" viewBox="0 0 9 6"><path d="M0.5 0.5 L4.5 5.2 L8.5 0.5 Z" fill="#444"/></svg></div>
<div class="a" style="left:863px;top:168px;width:12px;height:147px;background:#c2c2c2"></div>
<div class="a tb" style="left:461px;top:453px"><svg width="19" height="20" viewBox="0 0 19 20"><path d="M3 4 H14 L9.9 8.3 V11.6 H7.1 V8.3 Z" fill="#333"/><path d="M5.6 5.2 H11.4 L9 7.6 V10.2 H8 V7.6 Z" fill="#c9d6d6"/><path d="M12.5 11 V15.9 M10 13.4 H15" stroke="#444" stroke-width="1.2"/></svg></div>
<div class="a tb" style="left:490px;top:453px"><svg width="19" height="20" viewBox="0 0 19 20"><rect x="2.8" y="2.8" width="14.2" height="13.2" fill="#fff" stroke="#8a8a8a" stroke-width="1.3"/><rect x="4.2" y="4.2" width="11.6" height="10.6" fill="#c8c8c8"/><g fill="#f4f4f4"><rect x="5" y="6" width="1.6" height="1.2"/><rect x="7.2" y="6" width="1.8" height="1.2"/><rect x="10" y="6" width="1.8" height="1.2"/><rect x="12.6" y="6" width="2.4" height="1.2"/><rect x="5" y="8" width="1.6" height="1.2"/><rect x="7.2" y="8" width="1.8" height="1.2"/><rect x="10" y="8" width="1.8" height="1.2"/><rect x="12.6" y="8" width="2.4" height="1.2"/><rect x="5" y="10" width="1.6" height="1.2"/><rect x="7.2" y="10" width="1.8" height="1.2"/><rect x="10" y="10" width="1.8" height="1.2"/><rect x="12.6" y="10" width="2.4" height="1.2"/><rect x="5" y="12" width="1.6" height="1.2"/><rect x="7.2" y="12" width="1.8" height="1.2"/><rect x="10" y="12" width="1.8" height="1.2"/><rect x="12.6" y="12" width="2.4" height="1.2"/></g><rect x="9.6" y="4.3" width="2.8" height="10.4" fill="none" stroke="#444" stroke-width="0.9"/></svg></div>
<div class="a tb" style="left:514px;top:453px"><svg width="19" height="20" viewBox="0 0 19 20"><path d="M3.4 4 L4.6 3.2 V6.6 M3.2 6.6 H5.9" stroke="#222" stroke-width="1.1" fill="none"/><path d="M3 8.6 Q4.5 7.6 5.6 8.6 Q5.8 9.8 3.2 11.5 H5.9" stroke="#222" stroke-width="1.1" fill="none"/><path d="M3 13.5 H5.6 L4.2 14.8 Q6 15 5.7 16.2 Q4.6 17.4 3 16.5" stroke="#222" stroke-width="1.1" fill="none"/><path d="M8.2 4.6 H17 M8.2 9.6 H17 M8.2 14.6 H17" stroke="#222" stroke-width="1.2"/></svg></div>
<div class="a tb" style="left:538px;top:453px"><svg width="19" height="20" viewBox="0 0 19 20"><rect x="4.5" y="2.6" width="10" height="14.8" fill="#ececec" stroke="#6a6a6a" stroke-width="1"/><rect x="4.5" y="4" width="10" height="3.4" fill="#555"/><rect x="5.5" y="5" width="7.5" height="1.6" fill="#9a9a9a"/><g fill="#8a8a8a"><rect x="5.9" y="9" width="1.2" height="1.2"/><rect x="7.9" y="9" width="1.2" height="1.2"/><rect x="9.9" y="9" width="1.2" height="1.2"/><rect x="11.9" y="9" width="1.2" height="1.2"/><rect x="5.9" y="11" width="1.2" height="1.2"/><rect x="7.9" y="11" width="1.2" height="1.2"/><rect x="9.9" y="11" width="1.2" height="1.2"/><rect x="5.9" y="13" width="1.2" height="1.2"/><rect x="7.9" y="13" width="1.2" height="1.2"/><rect x="5.9" y="15" width="1.2" height="1.2"/><rect x="7.9" y="15" width="1.2" height="1.2"/></g><path d="M14.5 10.8 V17.8 M11 14.3 H18" stroke="#444" stroke-width="3.4"/><path d="M14.5 11.5 V17.1 M11.7 14.3 H17.3" stroke="#7a7a7a" stroke-width="1.8"/></svg></div>
<div class="a tb" style="left:567px;top:453px"><svg width="19" height="20" viewBox="0 0 19 20"><path d="M2.6 9 Q2.6 7.6 4 7.6 H15 Q16.4 7.6 16.4 9 V15.6 Q16.4 16.8 15 16.8 H4 Q2.6 16.8 2.6 15.6 Z" fill="#9a9a9a" stroke="#333" stroke-width="1"/><path d="M6 9 L8.3 3.2 H15.8 L13.4 9 Z" fill="#f4f4f4" stroke="#555" stroke-width="0.9"/><path d="M9.3 5.3 H13 M8.6 7 H12.2" stroke="#888" stroke-width="0.8"/><rect x="3.5" y="11.2" width="9.5" height="3.8" fill="#f2f2f2"/><path d="M3.2 16.4 H15.8" stroke="#222" stroke-width="1.2"/></svg></div>
<div class="a tb" style="left:591px;top:453px"><svg width="19" height="20" viewBox="0 0 19 20"><rect x="3.4" y="3.4" width="14" height="13.2" fill="#eeeeee" stroke="#6e6e6e" stroke-width="1.4"/><rect x="4.1" y="4.1" width="12.6" height="1.2" fill="#9a9a9a"/><path d="M6.3 7.4 L15.4 13.4" stroke="#666" stroke-width="2"/><path d="M14.8 7.3 L6.6 12.8" stroke="#777" stroke-width="1.4"/><path d="M7.5 8.2 H13.5 M6.5 12.4 H11.5" stroke="#999" stroke-width="0.8"/><rect x="4.1" y="14.6" width="12.6" height="1.3" fill="#fff"/></svg></div>
<div class="a tb" style="left:620px;top:453px"><svg width="19" height="20" viewBox="0 0 19 20"><rect x="3.7" y="3.6" width="13" height="13.2" fill="#fff" stroke="#000" stroke-width="1.5"/><rect x="4.5" y="4.4" width="11.5" height="5" fill="#d8d8d8"/><rect x="8" y="4.4" width="4.4" height="11.8" fill="#cfcfcf"/><path d="M7.6 4.4 V16.2 M12.5 4.4 V16.2" stroke="#777" stroke-width="0.9"/><path d="M4.5 9.6 H16" stroke="#eee" stroke-width="0.8"/><rect x="11" y="11" width="7" height="7" fill="#fff"/><path d="M12.2 12.2 L16.8 16.8 M16.8 12.2 L12.2 16.8" stroke="#8a8a8a" stroke-width="3.4" stroke-linecap="round"/><path d="M12.3 12.3 L16.7 16.7 M16.7 12.3 L12.3 16.7" stroke="#fff" stroke-width="1.8"/></svg></div>
<div class="a fcb" style="left:815px;top:453px"></div>
<div class="a t" style="left:831px;top:454px;font-size:10.6px;font-weight:normal;color:#1e1e1e;">Отм. (F6)</div>
<div class="a fs" style="left:894px;top:107px;width:302px;height:387px"></div>
<div class="a lg" style="left:899px;top:99px;width:41px;">Дерево</div>
<div class="a grid" style="left:900px;top:114px;width:292px;height:351px"></div>
<div class="a" style="left:1002px;top:115px;width:1px;height:34px;background:#dcdcdc"></div>
<div class="a" style="left:1027px;top:115px;width:1px;height:34px;background:#dcdcdc"></div>
<div class="a hd" style="left:900px;top:115px;width:102px;height:34px"><div class="hdi">Дерево</div></div>
<div class="a hd" style="left:1002px;top:115px;width:25px;height:34px;overflow:hidden"><div class="hdi" style="text-align:left;padding-left:2px">Пор</div></div>
<div class="a hd" style="left:1027px;top:115px;width:164px;height:34px"><div class="hdi">Наименование</div></div>
<div class="a" style="left:901px;top:149px;width:290px;height:2px;background:#5c5c5c"></div>
<div class="a" style="left:901px;top:151px;width:290px;height:17px;border-bottom:1px solid #d9d9d9;background:#eeeef9;"></div>
<div class="a" style="left:1002px;top:151px;width:1px;height:17px;background:#d9d9d9"></div>
<div class="a" style="left:1027px;top:151px;width:1px;height:17px;background:#d9d9d9"></div>
<div class="a c" style="left:1027px;top:151px;width:160px;height:16px">Все</div>
<div class="a" style="left:903px;top:154px;line-height:0"><svg width="11" height="11" viewBox="0 0 11 11"><circle cx="5.5" cy="5.5" r="4.3" fill="#fff" stroke="#666" stroke-width="1"/><path d="M5.5 3 V8 M3 5.5 H8" stroke="#555" stroke-width="1"/></svg></div>
<div class="a" style="left:901px;top:168px;width:290px;height:17px;border-bottom:1px solid #d9d9d9;"></div>
<div class="a" style="left:1002px;top:168px;width:1px;height:17px;background:#d9d9d9"></div>
<div class="a" style="left:1027px;top:168px;width:1px;height:17px;background:#d9d9d9"></div>
<div class="a c" style="left:1027px;top:168px;width:160px;height:16px">Джестори</div>
<div class="a" style="left:903px;top:171px;line-height:0"><svg width="11" height="11" viewBox="0 0 11 11"><circle cx="5.5" cy="5.5" r="4.3" fill="#fff" stroke="#666" stroke-width="1"/><path d="M5.5 3 V8 M3 5.5 H8" stroke="#555" stroke-width="1"/></svg></div>
<div class="a tb" style="left:901px;top:469px"><svg width="19" height="20" viewBox="0 0 19 20"><path d="M3 4 H14 L9.9 8.3 V11.6 H7.1 V8.3 Z" fill="#333"/><path d="M5.6 5.2 H11.4 L9 7.6 V10.2 H8 V7.6 Z" fill="#c9d6d6"/><path d="M12.5 11 V15.9 M10 13.4 H15" stroke="#444" stroke-width="1.2"/></svg></div>
<div class="a fcb" style="left:1108px;top:470px"><svg width="9" height="9" viewBox="0 0 9 9" style="position:absolute;left:0px;top:0px;overflow:visible"><path d="M1.1 3.7 L3.6 6.7 L7.9 1.9" stroke="#000" stroke-width="2" fill="none"/></svg></div>
<div class="a t" style="left:1124px;top:470.5px;font-size:10.6px;font-weight:normal;color:#1e1e1e;">Активные (F5)</div>
<div class="a fs" style="left:1208px;top:107px;width:429px;height:387px"></div>
<div class="a lg" style="left:1213px;top:99px;width:27px;">SKU</div>
<div class="a grid" style="left:1213px;top:114px;width:420px;height:351px"></div>
<div class="a" style="left:1303px;top:115px;width:1px;height:34px;background:#dcdcdc"></div>
<div class="a hd" style="left:1213px;top:115px;width:90px;height:34px;"><div class="hdi" style="line-height:12px">Код</div></div>
<div class="a" style="left:1551px;top:115px;width:1px;height:34px;background:#dcdcdc"></div>
<div class="a hd" style="left:1303px;top:115px;width:248px;height:34px;"><div class="hdi" style="line-height:12px"><svg class='sort' width='9' height='7' viewBox='0 0 9 7'><path d='M4.5 0.8 L8.3 6.3 H0.7 Z' fill='#a9c1f0' stroke='#4a5f86' stroke-width='1.1'/></svg>Наименование</div></div>
<div class="a" style="left:1585px;top:115px;width:1px;height:34px;background:#dcdcdc"></div>
<div class="a hd" style="left:1551px;top:115px;width:34px;height:34px;"><div class="hdi" style="line-height:12px">Ед.<br>изм.</div></div>
<div class="a" style="left:1613px;top:115px;width:1px;height:34px;background:#dcdcdc"></div>
<div class="a hd" style="left:1585px;top:115px;width:28px;height:34px;"><div class="hdi" style="line-height:12px">Вкл.<span class='tri'></span></div></div>
<div class="a" style="left:1214px;top:151px;width:418px;height:314px;overflow:hidden">
<div class="a" style="left:0;top:0px;width:399px;height:17px;border-bottom:1px solid #d9d9d9;background:#eeeef9;"></div>
<div class="a c" style="left:-1px;top:0px;width:90px;height:16px;text-align:left;color:#1e1e1e">3607349682750</div>
<div class="a c" style="left:89px;top:0px;width:248px;height:16px;text-align:left;color:#1e1e1e">Антиперспирант «Adidas» cool &amp; care fresh, 150 мл</div>
<div class="a c" style="left:337px;top:0px;width:34px;height:16px;text-align:left;color:#a9a9a9">Не определено</div>
<div class="a cb" style="left:379px;top:1px"><svg width="9" height="9" viewBox="0 0 9 9" style="position:absolute;left:0px;top:0px;overflow:visible"><path d="M1.1 3.7 L3.6 6.7 L7.9 1.9" stroke="#000" stroke-width="2" fill="none"/></svg></div>
<div class="a" style="left:89px;top:0px;width:1px;height:17px;background:#d9d9d9"></div>
<div class="a" style="left:337px;top:0px;width:1px;height:17px;background:#d9d9d9"></div>
<div class="a" style="left:371px;top:0px;width:1px;height:17px;background:#d9d9d9"></div>
<div class="a" style="left:399px;top:0px;width:1px;height:17px;background:#d9d9d9"></div>
<div class="a" style="left:0;top:17px;width:399px;height:17px;border-bottom:1px solid #d9d9d9;"></div>
<div class="a c" style="left:-1px;top:17px;width:90px;height:16px;text-align:left;color:#1e1e1e">1</div>
<div class="a c" style="left:89px;top:17px;width:248px;height:16px;text-align:left;color:#1e1e1e">АБРИКОС 1КГ 1кг.</div>
<div class="a c" style="left:337px;top:17px;width:34px;height:16px;text-align:left;color:#1e1e1e">кг.</div>
<div class="a cb" style="left:379px;top:18px"><svg width="9" height="9" viewBox="0 0 9 9" style="position:absolute;left:0px;top:0px;overflow:visible"><path d="M1.1 3.7 L3.6 6.7 L7.9 1.9" stroke="#000" stroke-width="2" fill="none"/></svg></div>
<div class="a" style="left:89px;top:17px;width:1px;height:17px;background:#d9d9d9"></div>
<div class="a" style="left:337px;top:17px;width:1px;height:17px;background:#d9d9d9"></div>
<div class="a" style="left:371px;top:17px;width:1px;height:17px;background:#d9d9d9"></div>
<div class="a" style="left:399px;top:17px;width:1px;height:17px;background:#d9d9d9"></div>
<div class="a" style="left:0;top:34px;width:399px;height:17px;border-bottom:1px solid #d9d9d9;"></div>
<div class="a c" style="left:-1px;top:34px;width:90px;height:16px;text-align:left;color:#1e1e1e">2</div>
<div class="a c" style="left:89px;top:34px;width:248px;height:16px;text-align:left;color:#1e1e1e">АБРИКОС БЕЛЫЙ ПЕЛИКАН СУШЕНЫЙ 200Г БЕЛЫЙ ПЕЛИКАН</div>
<div class="a c" style="left:337px;top:34px;width:34px;height:16px;text-align:left;color:#1e1e1e">шт.</div>
<div class="a cb" style="left:379px;top:35px"><svg width="9" height="9" viewBox="0 0 9 9" style="position:absolute;left:0px;top:0px;overflow:visible"><path d="M1.1 3.7 L3.6 6.7 L7.9 1.9" stroke="#000" stroke-width="2" fill="none"/></svg></div>
<div class="a" style="left:89px;top:34px;width:1px;height:17px;background:#d9d9d9"></div>
<div class="a" style="left:337px;top:34px;width:1px;height:17px;background:#d9d9d9"></div>
<div class="a" style="left:371px;top:34px;width:1px;height:17px;background:#d9d9d9"></div>
<div class="a" style="left:399px;top:34px;width:1px;height:17px;background:#d9d9d9"></div>
<div class="a" style="left:0;top:51px;width:399px;height:17px;border-bottom:1px solid #d9d9d9;"></div>
<div class="a c" style="left:-1px;top:51px;width:90px;height:16px;text-align:left;color:#1e1e1e">4</div>
<div class="a c" style="left:89px;top:51px;width:248px;height:16px;text-align:left;color:#1e1e1e">АБРИКОС КОРЗИНКА 1КГ 1кг.</div>
<div class="a c" style="left:337px;top:51px;width:34px;height:16px;text-align:left;color:#1e1e1e">кг.</div>
<div class="a cb" style="left:379px;top:52px"><svg width="9" height="9" viewBox="0 0 9 9" style="position:absolute;left:0px;top:0px;overflow:visible"><path d="M1.1 3.7 L3.6 6.7 L7.9 1.9" stroke="#000" stroke-width="2" fill="none"/></svg></div>
<div class="a" style="left:89px;top:51px;width:1px;height:17px;background:#d9d9d9"></div>
<div class="a" style="left:337px;top:51px;width:1px;height:17px;background:#d9d9d9"></div>
<div class="a" style="left:371px;top:51px;width:1px;height:17px;background:#d9d9d9"></div>
<div class="a" style="left:399px;top:51px;width:1px;height:17px;background:#d9d9d9"></div>
<div class="a" style="left:0;top:68px;width:399px;height:17px;border-bottom:1px solid #d9d9d9;"></div>
<div class="a c" style="left:-1px;top:68px;width:90px;height:16px;text-align:left;color:#a9a9a9">Не определено</div>
<div class="a c" style="left:89px;top:68px;width:248px;height:16px;text-align:left;color:#1e1e1e">АБРИКОС КОРЗИНКА (УЦЕН.) 1КГ 1кг.</div>
<div class="a c" style="left:337px;top:68px;width:34px;height:16px;text-align:left;color:#1e1e1e">кг.</div>
<div class="a cb" style="left:379px;top:69px"><svg width="9" height="9" viewBox="0 0 9 9" style="position:absolute;left:0px;top:0px;overflow:visible"><path d="M1.1 3.7 L3.6 6.7 L7.9 1.9" stroke="#000" stroke-width="2" fill="none"/></svg></div>
<div class="a" style="left:89px;top:68px;width:1px;height:17px;background:#d9d9d9"></div>
<div class="a" style="left:337px;top:68px;width:1px;height:17px;background:#d9d9d9"></div>
<div class="a" style="left:371px;top:68px;width:1px;height:17px;background:#d9d9d9"></div>
<div class="a" style="left:399px;top:68px;width:1px;height:17px;background:#d9d9d9"></div>
<div class="a" style="left:0;top:85px;width:399px;height:17px;border-bottom:1px solid #d9d9d9;"></div>
<div class="a c" style="left:-1px;top:85px;width:90px;height:16px;text-align:left;color:#1e1e1e">6</div>
<div class="a c" style="left:89px;top:85px;width:248px;height:16px;text-align:left;color:#1e1e1e">АБРИКОСЫ ВЕС.СУШ 1КГ НЕТ БРЕНДА 1кг.</div>
<div class="a c" style="left:337px;top:85px;width:34px;height:16px;text-align:left;color:#1e1e1e">кг.</div>
<div class="a cb" style="left:379px;top:86px"><svg width="9" height="9" viewBox="0 0 9 9" style="position:absolute;left:0px;top:0px;overflow:visible"><path d="M1.1 3.7 L3.6 6.7 L7.9 1.9" stroke="#000" stroke-width="2" fill="none"/></svg></div>
<div class="a" style="left:89px;top:85px;width:1px;height:17px;background:#d9d9d9"></div>
<div class="a" style="left:337px;top:85px;width:1px;height:17px;background:#d9d9d9"></div>
<div class="a" style="left:371px;top:85px;width:1px;height:17px;background:#d9d9d9"></div>
<div class="a" style="left:399px;top:85px;width:1px;height:17px;background:#d9d9d9"></div>
<div class="a" style="left:0;top:102px;width:399px;height:17px;border-bottom:1px solid #d9d9d9;"></div>
<div class="a c" style="left:-1px;top:102px;width:90px;height:16px;text-align:left;color:#1e1e1e">8</div>
<div class="a c" style="left:89px;top:102px;width:248px;height:16px;text-align:left;color:#1e1e1e">АБРИКОСЫ КОНС.АРИСТА 820Г АРИСТА 0.82кг.</div>
<div class="a c" style="left:337px;top:102px;width:34px;height:16px;text-align:left;color:#1e1e1e">шт.</div>
<div class="a cb" style="left:379px;top:103px"><svg width="9" height="9" viewBox="0 0 9 9" style="position:absolute;left:0px;top:0px;overflow:visible"><path d="M1.1 3.7 L3.6 6.7 L7.9 1.9" stroke="#000" stroke-width="2" fill="none"/></svg></div>
<div class="a" style="left:89px;top:102px;width:1px;height:17px;background:#d9d9d9"></div>
<div class="a" style="left:337px;top:102px;width:1px;height:17px;background:#d9d9d9"></div>
<div class="a" style="left:371px;top:102px;width:1px;height:17px;background:#d9d9d9"></div>
<div class="a" style="left:399px;top:102px;width:1px;height:17px;background:#d9d9d9"></div>
<div class="a" style="left:0;top:119px;width:399px;height:17px;border-bottom:1px solid #d9d9d9;"></div>
<div class="a c" style="left:-1px;top:119px;width:90px;height:16px;text-align:left;color:#1e1e1e">9</div>
<div class="a c" style="left:89px;top:119px;width:248px;height:16px;text-align:left;color:#1e1e1e">АБРИКОСЫ ЛОРАДО ПОЛОВ.В ЛЕГ.СИР. 425Г ЖЕСТЬ</div>
<div class="a c" style="left:337px;top:119px;width:34px;height:16px;text-align:left;color:#1e1e1e">шт.</div>
<div class="a cb" style="left:379px;top:120px"><svg width="9" height="9" viewBox="0 0 9 9" style="position:absolute;left:0px;top:0px;overflow:visible"><path d="M1.1 3.7 L3.6 6.7 L7.9 1.9" stroke="#000" stroke-width="2" fill="none"/></svg></div>
<div class="a" style="left:89px;top:119px;width:1px;height:17px;background:#d9d9d9"></div>
<div class="a" style="left:337px;top:119px;width:1px;height:17px;background:#d9d9d9"></div>
<div class="a" style="left:371px;top:119px;width:1px;height:17px;background:#d9d9d9"></div>
<div class="a" style="left:399px;top:119px;width:1px;height:17px;background:#d9d9d9"></div>
<div class="a" style="left:0;top:136px;width:399px;height:17px;border-bottom:1px solid #d9d9d9;"></div>
<div class="a c" style="left:-1px;top:136px;width:90px;height:16px;text-align:left;color:#1e1e1e">11</div>
<div class="a c" style="left:89px;top:136px;width:248px;height:16px;text-align:left;color:#1e1e1e">АБРИКОСЫ МИКАДО ПОЛОВ.В СИРОПЕ 850Г ЖЕСТЬ</div>
<div class="a c" style="left:337px;top:136px;width:34px;height:16px;text-align:left;color:#1e1e1e">шт.</div>
<div class="a cb" style="left:379px;top:137px"><svg width="9" height="9" viewBox="0 0 9 9" style="position:absolute;left:0px;top:0px;overflow:visible"><path d="M1.1 3.7 L3.6 6.7 L7.9 1.9" stroke="#000" stroke-width="2" fill="none"/></svg></div>
<div class="a" style="left:89px;top:136px;width:1px;height:17px;background:#d9d9d9"></div>
<div class="a" style="left:337px;top:136px;width:1px;height:17px;background:#d9d9d9"></div>
<div class="a" style="left:371px;top:136px;width:1px;height:17px;background:#d9d9d9"></div>
<div class="a" style="left:399px;top:136px;width:1px;height:17px;background:#d9d9d9"></div>
<div class="a" style="left:0;top:153px;width:399px;height:17px;border-bottom:1px solid #d9d9d9;"></div>
<div class="a c" style="left:-1px;top:153px;width:90px;height:16px;text-align:left;color:#1e1e1e">13</div>
<div class="a c" style="left:89px;top:153px;width:248px;height:16px;text-align:left;color:#1e1e1e">АБРИКОСЫ ЦАРСКИЕ СУШ.90Г ЦАРСКИЕ 0.09кг.</div>
<div class="a c" style="left:337px;top:153px;width:34px;height:16px;text-align:left;color:#1e1e1e">шт.</div>
<div class="a cb" style="left:379px;top:154px"><svg width="9" height="9" viewBox="0 0 9 9" style="position:absolute;left:0px;top:0px;overflow:visible"><path d="M1.1 3.7 L3.6 6.7 L7.9 1.9" stroke="#000" stroke-width="2" fill="none"/></svg></div>
<div class="a" style="left:89px;top:153px;width:1px;height:17px;background:#d9d9d9"></div>
<div class="a" style="left:337px;top:153px;width:1px;height:17px;background:#d9d9d9"></div>
<div class="a" style="left:371px;top:153px;width:1px;height:17px;background:#d9d9d9"></div>
<div class="a" style="left:399px;top:153px;width:1px;height:17px;background:#d9d9d9"></div>
<div class="a" style="left:0;top:170px;width:399px;height:17px;border-bottom:1px solid #d9d9d9;"></div>
<div class="a c" style="left:-1px;top:170px;width:90px;height:16px;text-align:left;color:#1e1e1e">14</div>
<div class="a c" style="left:89px;top:170px;width:248px;height:16px;text-align:left;color:#1e1e1e">АВОКАДО 1КГ 1кг.</div>
<div class="a c" style="left:337px;top:170px;width:34px;height:16px;text-align:left;color:#1e1e1e">кг.</div>
<div class="a cb" style="left:379px;top:171px"><svg width="9" height="9" viewBox="0 0 9 9" style="position:absolute;left:0px;top:0px;overflow:visible"><path d="M1.1 3.7 L3.6 6.7 L7.9 1.9" stroke="#000" stroke-width="2" fill="none"/></svg></div>
<div class="a" style="left:89px;top:170px;width:1px;height:17px;background:#d9d9d9"></div>
<div class="a" style="left:337px;top:170px;width:1px;height:17px;background:#d9d9d9"></div>
<div class="a" style="left:371px;top:170px;width:1px;height:17px;background:#d9d9d9"></div>
<div class="a" style="left:399px;top:170px;width:1px;height:17px;background:#d9d9d9"></div>
<div class="a" style="left:0;top:187px;width:399px;height:17px;border-bottom:1px solid #d9d9d9;"></div>
<div class="a c" style="left:-1px;top:187px;width:90px;height:16px;text-align:left;color:#1e1e1e">25</div>
<div class="a c" style="left:89px;top:187px;width:248px;height:16px;text-align:left;color:#1e1e1e">АВТОКАРАНДАШ 0.5ММ+ГРИФЕЛЬ 559511 МАРКЕР</div>
<div class="a c" style="left:337px;top:187px;width:34px;height:16px;text-align:left;color:#1e1e1e">шт.</div>
<div class="a cb" style="left:379px;top:188px"><svg width="9" height="9" viewBox="0 0 9 9" style="position:absolute;left:0px;top:0px;overflow:visible"><path d="M1.1 3.7 L3.6 6.7 L7.9 1.9" stroke="#000" stroke-width="2" fill="none"/></svg></div>
<div class="a" style="left:89px;top:187px;width:1px;height:17px;background:#d9d9d9"></div>
<div class="a" style="left:337px;top:187px;width:1px;height:17px;background:#d9d9d9"></div>
<div class="a" style="left:371px;top:187px;width:1px;height:17px;background:#d9d9d9"></div>
<div class="a" style="left:399px;top:187px;width:1px;height:17px;background:#d9d9d9"></div>
<div class="a" style="left:0;top:204px;width:399px;height:17px;border-bottom:1px solid #d9d9d9;"></div>
<div class="a c" style="left:-1px;top:204px;width:90px;height:16px;text-align:left;color:#1e1e1e">27</div>
<div class="a c" style="left:89px;top:204px;width:248px;height:16px;text-align:left;color:#1e1e1e">АВТОМОБИЛЬ ВИРАЖ ГОНОЧНЫЙ 35127 РБ 1кг.</div>
<div class="a c" style="left:337px;top:204px;width:34px;height:16px;text-align:left;color:#1e1e1e">шт.</div>
<div class="a cb" style="left:379px;top:205px"><svg width="9" height="9" viewBox="0 0 9 9" style="position:absolute;left:0px;top:0px;overflow:visible"><path d="M1.1 3.7 L3.6 6.7 L7.9 1.9" stroke="#000" stroke-width="2" fill="none"/></svg></div>
<div class="a" style="left:89px;top:204px;width:1px;height:17px;background:#d9d9d9"></div>
<div class="a" style="left:337px;top:204px;width:1px;height:17px;background:#d9d9d9"></div>
<div class="a" style="left:371px;top:204px;width:1px;height:17px;background:#d9d9d9"></div>
<div class="a" style="left:399px;top:204px;width:1px;height:17px;background:#d9d9d9"></div>
<div class="a" style="left:0;top:221px;width:399px;height:17px;border-bottom:1px solid #d9d9d9;"></div>
<div class="a c" style="left:-1px;top:221px;width:90px;height:16px;text-align:left;color:#1e1e1e">28</div>
<div class="a c" style="left:89px;top:221px;width:248px;height:16px;text-align:left;color:#1e1e1e">АВТОМОБИЛЬ ЖУК 0780 РБ 1кг.</div>
<div class="a c" style="left:337px;top:221px;width:34px;height:16px;text-align:left;color:#1e1e1e">шт.</div>
<div class="a cb" style="left:379px;top:222px"><svg width="9" height="9" viewBox="0 0 9 9" style="position:absolute;left:0px;top:0px;overflow:visible"><path d="M1.1 3.7 L3.6 6.7 L7.9 1.9" stroke="#000" stroke-width="2" fill="none"/></svg></div>
<div class="a" style="left:89px;top:221px;width:1px;height:17px;background:#d9d9d9"></div>
<div class="a" style="left:337px;top:221px;width:1px;height:17px;background:#d9d9d9"></div>
<div class="a" style="left:371px;top:221px;width:1px;height:17px;background:#d9d9d9"></div>
<div class="a" style="left:399px;top:221px;width:1px;height:17px;background:#d9d9d9"></div>
<div class="a" style="left:0;top:238px;width:399px;height:17px;border-bottom:1px solid #d9d9d9;"></div>
<div class="a c" style="left:-1px;top:238px;width:90px;height:16px;text-align:left;color:#1e1e1e">29</div>
<div class="a c" style="left:89px;top:238px;width:248px;height:16px;text-align:left;color:#1e1e1e">АВТОМОБИЛЬ ЛИДЕР 5952 РБ 1кг.</div>
<div class="a c" style="left:337px;top:238px;width:34px;height:16px;text-align:left;color:#1e1e1e">шт.</div>
<div class="a cb" style="left:379px;top:239px"><svg width="9" height="9" viewBox="0 0 9 9" style="position:absolute;left:0px;top:0px;overflow:visible"><path d="M1.1 3.7 L3.6 6.7 L7.9 1.9" stroke="#000" stroke-width="2" fill="none"/></svg></div>
<div class="a" style="left:89px;top:238px;width:1px;height:17px;background:#d9d9d9"></div>
<div class="a" style="left:337px;top:238px;width:1px;height:17px;background:#d9d9d9"></div>
<div class="a" style="left:371px;top:238px;width:1px;height:17px;background:#d9d9d9"></div>
<div class="a" style="left:399px;top:238px;width:1px;height:17px;background:#d9d9d9"></div>
<div class="a" style="left:0;top:255px;width:399px;height:17px;border-bottom:1px solid #d9d9d9;"></div>
<div class="a c" style="left:-1px;top:255px;width:90px;height:16px;text-align:left;color:#1e1e1e">33</div>
<div class="a c" style="left:89px;top:255px;width:248px;height:16px;text-align:left;color:#1e1e1e">АВТОМОБИЛЬ ПОЖАРНЫЙ АНТОШКА 4724 РБ 1кг.</div>
<div class="a c" style="left:337px;top:255px;width:34px;height:16px;text-align:left;color:#1e1e1e">шт.</div>
<div class="a cb" style="left:379px;top:256px"><svg width="9" height="9" viewBox="0 0 9 9" style="position:absolute;left:0px;top:0px;overflow:visible"><path d="M1.1 3.7 L3.6 6.7 L7.9 1.9" stroke="#000" stroke-width="2" fill="none"/></svg></div>
<div class="a" style="left:89px;top:255px;width:1px;height:17px;background:#d9d9d9"></div>
<div class="a" style="left:337px;top:255px;width:1px;height:17px;background:#d9d9d9"></div>
<div class="a" style="left:371px;top:255px;width:1px;height:17px;background:#d9d9d9"></div>
<div class="a" style="left:399px;top:255px;width:1px;height:17px;background:#d9d9d9"></div>
<div class="a" style="left:0;top:272px;width:399px;height:17px;border-bottom:1px solid #d9d9d9;"></div>
<div class="a c" style="left:-1px;top:272px;width:90px;height:16px;text-align:left;color:#1e1e1e">34</div>
<div class="a c" style="left:89px;top:272px;width:248px;height:16px;text-align:left;color:#1e1e1e">АВТОМОБИЛЬ ТЕМА БЕТОНОВОЗ 3260 РБ 1кг.</div>
<div class="a c" style="left:337px;top:272px;width:34px;height:16px;text-align:left;color:#1e1e1e">шт.</div>
<div class="a cb" style="left:379px;top:273px"><svg width="9" height="9" viewBox="0 0 9 9" style="position:absolute;left:0px;top:0px;overflow:visible"><path d="M1.1 3.7 L3.6 6.7 L7.9 1.9" stroke="#000" stroke-width="2" fill="none"/></svg></div>
<div class="a" style="left:89px;top:272px;width:1px;height:17px;background:#d9d9d9"></div>
<div class="a" style="left:337px;top:272px;width:1px;height:17px;background:#d9d9d9"></div>
<div class="a" style="left:371px;top:272px;width:1px;height:17px;background:#d9d9d9"></div>
<div class="a" style="left:399px;top:272px;width:1px;height:17px;background:#d9d9d9"></div>
<div class="a" style="left:0;top:289px;width:399px;height:17px;border-bottom:1px solid #d9d9d9;"></div>
<div class="a c" style="left:-1px;top:289px;width:90px;height:16px;text-align:left;color:#1e1e1e">35</div>
<div class="a c" style="left:89px;top:289px;width:248px;height:16px;text-align:left;color:#1e1e1e">АВТОМОБИЛЬ ТЕМА САМОСВАЛ 3253 РБ 1кг.</div>
<div class="a c" style="left:337px;top:289px;width:34px;height:16px;text-align:left;color:#1e1e1e">шт.</div>
<div class="a cb" style="left:379px;top:290px"><svg width="9" height="9" viewBox="0 0 9 9" style="position:absolute;left:0px;top:0px;overflow:visible"><path d="M1.1 3.7 L3.6 6.7 L7.9 1.9" stroke="#000" stroke-width="2" fill="none"/></svg></div>
<div class="a" style="left:89px;top:289px;width:1px;height:17px;background:#d9d9d9"></div>
<div class="a" style="left:337px;top:289px;width:1px;height:17px;background:#d9d9d9"></div>
<div class="a" style="left:371px;top:289px;width:1px;height:17px;background:#d9d9d9"></div>
<div class="a" style="left:399px;top:289px;width:1px;height:17px;background:#d9d9d9"></div>
<div class="a" style="left:0;top:306px;width:399px;height:17px;border-bottom:1px solid #d9d9d9;"></div>
<div class="a c" style="left:-1px;top:306px;width:90px;height:16px;text-align:left;color:#1e1e1e">36</div>
<div class="a c" style="left:89px;top:306px;width:248px;height:16px;text-align:left;color:#1e1e1e">АВТОМОБИЛЬ ФАВОРИТ САМОСВАЛ 4308 РБ 1кг.</div>
<div class="a c" style="left:337px;top:306px;width:34px;height:16px;text-align:left;color:#1e1e1e">кг.</div>
<div class="a cb" style="left:379px;top:307px"><svg width="9" height="9" viewBox="0 0 9 9" style="position:absolute;left:0px;top:0px;overflow:visible"><path d="M1.1 3.7 L3.6 6.7 L7.9 1.9" stroke="#000" stroke-width="2" fill="none"/></svg></div>
<div class="a" style="left:89px;top:306px;width:1px;height:17px;background:#d9d9d9"></div>
<div class="a" style="left:337px;top:306px;width:1px;height:17px;background:#d9d9d9"></div>
<div class="a" style="left:371px;top:306px;width:1px;height:17px;background:#d9d9d9"></div>
<div class="a" style="left:399px;top:306px;width:1px;height:17px;background:#d9d9d9"></div>
</div>
<div class="a" style="left:1214px;top:149px;width:418px;height:2px;background:#5c5c5c"></div>
<div class="a" style="left:1614px;top:151px;width:18px;height:313px;background:#efefef"></div>
<div class="a" style="left:1618px;top:157px;line-height:0"><svg width="9" height="6" viewBox="0 0 9 6"><path d="M0.5 5.5 L4.5 0.8 L8.5 5.5 Z" fill="#aaa"/></svg></div>
<div class="a" style="left:1618px;top:451px;line-height:0"><svg width="9" height="6" viewBox="0 0 9 6"><path d="M0.5 0.5 L4.5 5.2 L8.5 0.5 Z" fill="#444"/></svg></div>
<div class="a" style="left:1617px;top:168px;width:13px;height:182px;background:#c2c2c2"></div>
<div class="a tb" style="left:1214px;top:469px"><svg width="19" height="20" viewBox="0 0 19 20"><path d="M3 4 H14 L9.9 8.3 V11.6 H7.1 V8.3 Z" fill="#333"/><path d="M5.6 5.2 H11.4 L9 7.6 V10.2 H8 V7.6 Z" fill="#c9d6d6"/><path d="M12.5 11 V15.9 M10 13.4 H15" stroke="#444" stroke-width="1.2"/></svg></div>
<div class="a tb" style="left:1243px;top:469px"><svg width="19" height="20" viewBox="0 0 19 20"><rect x="2.8" y="2.8" width="14.2" height="13.2" fill="#fff" stroke="#8a8a8a" stroke-width="1.3"/><rect x="4.2" y="4.2" width="11.6" height="10.6" fill="#c8c8c8"/><g fill="#f4f4f4"><rect x="5" y="6" width="1.6" height="1.2"/><rect x="7.2" y="6" width="1.8" height="1.2"/><rect x="10" y="6" width="1.8" height="1.2"/><rect x="12.6" y="6" width="2.4" height="1.2"/><rect x="5" y="8" width="1.6" height="1.2"/><rect x="7.2" y="8" width="1.8" height="1.2"/><rect x="10" y="8" width="1.8" height="1.2"/><rect x="12.6" y="8" width="2.4" height="1.2"/><rect x="5" y="10" width="1.6" height="1.2"/><rect x="7.2" y="10" width="1.8" height="1.2"/><rect x="10" y="10" width="1.8" height="1.2"/><rect x="12.6" y="10" width="2.4" height="1.2"/><rect x="5" y="12" width="1.6" height="1.2"/><rect x="7.2" y="12" width="1.8" height="1.2"/><rect x="10" y="12" width="1.8" height="1.2"/><rect x="12.6" y="12" width="2.4" height="1.2"/></g><rect x="9.6" y="4.3" width="2.8" height="10.4" fill="none" stroke="#444" stroke-width="0.9"/></svg></div>
<div class="a tb" style="left:1267px;top:469px"><svg width="19" height="20" viewBox="0 0 19 20"><path d="M3.4 4 L4.6 3.2 V6.6 M3.2 6.6 H5.9" stroke="#222" stroke-width="1.1" fill="none"/><path d="M3 8.6 Q4.5 7.6 5.6 8.6 Q5.8 9.8 3.2 11.5 H5.9" stroke="#222" stroke-width="1.1" fill="none"/><path d="M3 13.5 H5.6 L4.2 14.8 Q6 15 5.7 16.2 Q4.6 17.4 3 16.5" stroke="#222" stroke-width="1.1" fill="none"/><path d="M8.2 4.6 H17 M8.2 9.6 H17 M8.2 14.6 H17" stroke="#222" stroke-width="1.2"/></svg></div>
<div class="a tb" style="left:1291px;top:469px"><svg width="19" height="20" viewBox="0 0 19 20"><rect x="4.5" y="2.6" width="10" height="14.8" fill="#ececec" stroke="#6a6a6a" stroke-width="1"/><rect x="4.5" y="4" width="10" height="3.4" fill="#555"/><rect x="5.5" y="5" width="7.5" height="1.6" fill="#9a9a9a"/><g fill="#8a8a8a"><rect x="5.9" y="9" width="1.2" height="1.2"/><rect x="7.9" y="9" width="1.2" height="1.2"/><rect x="9.9" y="9" width="1.2" height="1.2"/><rect x="11.9" y="9" width="1.2" height="1.2"/><rect x="5.9" y="11" width="1.2" height="1.2"/><rect x="7.9" y="11" width="1.2" height="1.2"/><rect x="9.9" y="11" width="1.2" height="1.2"/><rect x="5.9" y="13" width="1.2" height="1.2"/><rect x="7.9" y="13" width="1.2" height="1.2"/><rect x="5.9" y="15" width="1.2" height="1.2"/><rect x="7.9" y="15" width="1.2" height="1.2"/></g><path d="M14.5 10.8 V17.8 M11 14.3 H18" stroke="#444" stroke-width="3.4"/><path d="M14.5 11.5 V17.1 M11.7 14.3 H17.3" stroke="#7a7a7a" stroke-width="1.8"/></svg></div>
<div class="a tb" style="left:1320px;top:469px"><svg width="19" height="20" viewBox="0 0 19 20"><path d="M2.6 9 Q2.6 7.6 4 7.6 H15 Q16.4 7.6 16.4 9 V15.6 Q16.4 16.8 15 16.8 H4 Q2.6 16.8 2.6 15.6 Z" fill="#9a9a9a" stroke="#333" stroke-width="1"/><path d="M6 9 L8.3 3.2 H15.8 L13.4 9 Z" fill="#f4f4f4" stroke="#555" stroke-width="0.9"/><path d="M9.3 5.3 H13 M8.6 7 H12.2" stroke="#888" stroke-width="0.8"/><rect x="3.5" y="11.2" width="9.5" height="3.8" fill="#f2f2f2"/><path d="M3.2 16.4 H15.8" stroke="#222" stroke-width="1.2"/></svg></div>
<div class="a tb" style="left:1344px;top:469px"><svg width="19" height="20" viewBox="0 0 19 20"><rect x="3.4" y="3.4" width="14" height="13.2" fill="#eeeeee" stroke="#6e6e6e" stroke-width="1.4"/><rect x="4.1" y="4.1" width="12.6" height="1.2" fill="#9a9a9a"/><path d="M6.3 7.4 L15.4 13.4" stroke="#666" stroke-width="2"/><path d="M14.8 7.3 L6.6 12.8" stroke="#777" stroke-width="1.4"/><path d="M7.5 8.2 H13.5 M6.5 12.4 H11.5" stroke="#999" stroke-width="0.8"/><rect x="4.1" y="14.6" width="12.6" height="1.3" fill="#fff"/></svg></div>
<div class="a tb" style="left:1373px;top:469px"><svg width="19" height="20" viewBox="0 0 19 20"><rect x="3.7" y="3.6" width="13" height="13.2" fill="#fff" stroke="#000" stroke-width="1.5"/><rect x="4.5" y="4.4" width="11.5" height="5" fill="#d8d8d8"/><rect x="8" y="4.4" width="4.4" height="11.8" fill="#cfcfcf"/><path d="M7.6 4.4 V16.2 M12.5 4.4 V16.2" stroke="#777" stroke-width="0.9"/><path d="M4.5 9.6 H16" stroke="#eee" stroke-width="0.8"/><rect x="11" y="11" width="7" height="7" fill="#fff"/><path d="M12.2 12.2 L16.8 16.8 M16.8 12.2 L12.2 16.8" stroke="#8a8a8a" stroke-width="3.4" stroke-linecap="round"/><path d="M12.3 12.3 L16.7 16.7 M16.7 12.3 L12.3 16.7" stroke="#fff" stroke-width="1.8"/></svg></div>
<div class="a fcb" style="left:1569px;top:471px"></div>
<div class="a t" style="left:1585px;top:471px;font-size:10.6px;font-weight:normal;color:#1e1e1e;">Отм. (F6)</div>
<div class="a fs" style="left:12px;top:514px;width:1625px;height:370px"></div>
<div class="a lg" style="left:18px;top:506px;width:122px;">Строка заказа (закупка)</div>
<div class="a grid" style="left:17px;top:521px;width:1616px;height:334px"></div>
<div class="a" style="left:49px;top:522px;width:1px;height:34px;background:#dcdcdc"></div>
<div class="a hd" style="left:18px;top:522px;width:31px;height:34px;"><div class="hdi" style="line-height:12px">Пров</div></div>
<div class="a" style="left:81px;top:522px;width:1px;height:34px;background:#dcdcdc"></div>
<div class="a hd" style="left:49px;top:522px;width:32px;height:34px;"><div class="hdi" style="line-height:12px">Закр</div></div>
<div class="a" style="left:135px;top:522px;width:1px;height:34px;background:#dcdcdc"></div>
<div class="a hd" style="left:81px;top:522px;width:54px;height:34px;"><div class="hdi" style="line-height:12px">Номер</div></div>
<div class="a" style="left:162px;top:522px;width:1px;height:34px;background:#dcdcdc"></div>
<div class="a hd" style="left:135px;top:522px;width:27px;height:34px;"><div class="hdi" style="line-height:12px">Сери</div></div>
<div class="a" style="left:213px;top:522px;width:1px;height:34px;background:#dcdcdc"></div>
<div class="a hd" style="left:162px;top:522px;width:51px;height:34px;"><div class="hdi" style="line-height:12px">Дата<br>документ</div></div>
<div class="a" style="left:265px;top:522px;width:1px;height:34px;background:#dcdcdc"></div>
<div class="a hd" style="left:213px;top:522px;width:52px;height:34px;"><div class="hdi" style="line-height:12px">Время<br>документ</div></div>
<div class="a" style="left:405px;top:522px;width:1px;height:34px;background:#dcdcdc"></div>
<div class="a hd" style="left:265px;top:522px;width:140px;height:34px;"><div class="hdi" style="line-height:12px">Поставщик</div></div>
<div class="a" style="left:481px;top:522px;width:1px;height:34px;background:#dcdcdc"></div>
<div class="a hd" style="left:405px;top:522px;width:76px;height:34px;"><div class="hdi" style="line-height:12px">Склад<br>поставщика</div></div>
<div class="a" style="left:620px;top:522px;width:1px;height:34px;background:#dcdcdc"></div>
<div class="a hd" style="left:481px;top:522px;width:139px;height:34px;"><div class="hdi" style="line-height:12px">Покупатель</div></div>
<div class="a" style="left:694px;top:522px;width:1px;height:34px;background:#dcdcdc"></div>
<div class="a hd" style="left:620px;top:522px;width:74px;height:34px;"><div class="hdi" style="line-height:12px">Склад<br>покупателя</div></div>
<div class="a" style="left:767px;top:522px;width:1px;height:34px;background:#dcdcdc"></div>
<div class="a hd" style="left:694px;top:522px;width:73px;height:34px;"><div class="hdi" style="line-height:12px">Код</div></div>
<div class="a" style="left:874px;top:522px;width:1px;height:34px;background:#dcdcdc"></div>
<div class="a hd" style="left:767px;top:522px;width:107px;height:34px;"><div class="hdi" style="line-height:12px">Штрихкод</div></div>
<div class="a" style="left:1080px;top:522px;width:1px;height:34px;background:#dcdcdc"></div>
<div class="a hd" style="left:874px;top:522px;width:206px;height:34px;"><div class="hdi" style="line-height:12px">Наименование</div></div>
<div class="a" style="left:1108px;top:522px;width:1px;height:34px;background:#dcdcdc"></div>
<div class="a hd" style="left:1080px;top:522px;width:28px;height:34px;"><div class="hdi" style="line-height:12px">Ед.<br>изм.</div></div>
<div class="a" style="left:1162px;top:522px;width:1px;height:34px;background:#dcdcdc"></div>
<div class="a hd" style="left:1108px;top:522px;width:54px;height:34px;"><div class="hdi" style="line-height:12px">Кол-во</div></div>
<div class="a" style="left:1216px;top:522px;width:1px;height:34px;background:#dcdcdc"></div>
<div class="a hd" style="left:1162px;top:522px;width:54px;height:34px;"><div class="hdi" style="line-height:12px">Кол-во<br>(поставлено)</div></div>
<div class="a" style="left:1290px;top:522px;width:1px;height:34px;background:#dcdcdc"></div>
<div class="a hd" style="left:1216px;top:522px;width:74px;height:34px;"><div class="hdi" style="line-height:12px">% исп.<br>заявки (кол-<br>во)</div></div>
<div class="a" style="left:1356px;top:522px;width:1px;height:34px;background:#dcdcdc"></div>
<div class="a hd" style="left:1290px;top:522px;width:66px;height:34px;"><div class="hdi" style="line-height:12px">Сумма</div></div>
<div class="a" style="left:1429px;top:522px;width:1px;height:34px;background:#dcdcdc"></div>
<div class="a hd" style="left:1356px;top:522px;width:73px;height:34px;"><div class="hdi" style="line-height:12px">Сумма<br>(поставлено)</div></div>
<div class="a" style="left:1503px;top:522px;width:1px;height:34px;background:#dcdcdc"></div>
<div class="a hd" style="left:1429px;top:522px;width:74px;height:34px;"><div class="hdi" style="line-height:12px">% исп.<br>заявки<br>(сумма)</div></div>
<div class="a" style="left:1564px;top:522px;width:1px;height:34px;background:#dcdcdc"></div>
<div class="a hd" style="left:1503px;top:522px;width:61px;height:34px;"><div class="hdi" style="line-height:12px">Сумма<br>НДС</div></div>
<div class="a" style="left:1630px;top:522px;width:1px;height:34px;background:#dcdcdc"></div>
<div class="a hd" style="left:1564px;top:522px;width:66px;height:34px;"><div class="hdi" style="line-height:12px">Сумма с<br>НДС</div></div>
<div class="a" style="left:18px;top:558px;width:1614px;height:297px;overflow:hidden">
<div class="a" style="left:0;top:0px;width:1612px;height:17px;border-bottom:1px solid #d9d9d9;background:#eeeef9;"></div>
<div class="a cb" style="left:10px;top:1px"><svg width="9" height="9" viewBox="0 0 9 9" style="position:absolute;left:0px;top:0px;overflow:visible"><path d="M1.1 3.7 L3.6 6.7 L7.9 1.9" stroke="#000" stroke-width="2" fill="none"/></svg></div>
<div class="a cb" style="left:41px;top:1px"><svg width="9" height="9" viewBox="0 0 9 9" style="position:absolute;left:0px;top:0px;overflow:visible"><path d="M1.1 3.7 L3.6 6.7 L7.9 1.9" stroke="#000" stroke-width="2" fill="none"/></svg></div>
<div class="a c" style="left:63px;top:0px;width:54px;height:16px;text-align:left;color:#1e1e1e">18214</div>
<div class="a c" style="left:117px;top:0px;width:27px;height:16px;text-align:left;color:#a9a9a9">Не определено</div>
<div class="a c" style="left:144px;top:0px;width:51px;height:16px;text-align:left;color:#1e1e1e">01.08.19</div>
<div class="a c" style="left:195px;top:0px;width:52px;height:16px;text-align:left;color:#1e1e1e">20:00:49</div>
<div class="a c" style="left:247px;top:0px;width:140px;height:16px;text-align:left;color:#1e1e1e">ВОЛКОВЫССКИЙ МЯСОКОМБИНАТ ОАО</div>
<div class="a c" style="left:387px;top:0px;width:76px;height:16px;text-align:left;color:#1e1e1e">Склад ВОЛКОВЫССКИЙ</div>
<div class="a c" style="left:463px;top:0px;width:139px;height:16px;text-align:left;color:#1e1e1e">ООО &quot;ЛюксСофтОпт&quot;</div>
<div class="a c" style="left:602px;top:0px;width:74px;height:16px;text-align:left;color:#1e1e1e">Магазин 5</div>
<div class="a c" style="left:676px;top:0px;width:73px;height:16px;text-align:left;color:#1e1e1e">23247</div>
<div class="a c" style="left:749px;top:0px;width:107px;height:16px;text-align:left;color:#1e1e1e">4811219028268</div>
<div class="a c" style="left:856px;top:0px;width:206px;height:16px;text-align:left;color:#1e1e1e">ПЕЛЬМЕНИ ТАЕЖНЫЕ ОСОБЫЕ РБ 450Г</div>
<div class="a c" style="left:1062px;top:0px;width:28px;height:16px;text-align:left;color:#1e1e1e">шт.</div>
<div class="a c" style="left:1090px;top:0px;width:54px;height:16px;text-align:right;color:#1e1e1e">60</div>
<div class="a c" style="left:1144px;top:0px;width:54px;height:16px;text-align:right;color:#1e1e1e">60</div>
<div class="a c" style="left:1198px;top:0px;width:74px;height:16px;text-align:right;color:#1e1e1e">100</div>
<div class="a c" style="left:1272px;top:0px;width:66px;height:16px;text-align:right;color:#1e1e1e">87,6</div>
<div class="a c" style="left:1338px;top:0px;width:73px;height:16px;text-align:right;color:#1e1e1e">87,6</div>
<div class="a c" style="left:1411px;top:0px;width:74px;height:16px;text-align:right;color:#1e1e1e">100</div>
<div class="a c" style="left:1485px;top:0px;width:61px;height:16px;text-align:right;color:#1e1e1e">8,76</div>
<div class="a c" style="left:1546px;top:0px;width:66px;height:16px;text-align:right;color:#1e1e1e">96,36</div>
<div class="a" style="left:31px;top:0px;width:1px;height:17px;background:#d9d9d9"></div>
<div class="a" style="left:63px;top:0px;width:1px;height:17px;background:#d9d9d9"></div>
<div class="a" style="left:117px;top:0px;width:1px;height:17px;background:#d9d9d9"></div>
<div class="a" style="left:144px;top:0px;width:1px;height:17px;background:#d9d9d9"></div>
<div class="a" style="left:195px;top:0px;width:1px;height:17px;background:#d9d9d9"></div>
<div class="a" style="left:247px;top:0px;width:1px;height:17px;background:#d9d9d9"></div>
<div class="a" style="left:387px;top:0px;width:1px;height:17px;background:#d9d9d9"></div>
<div class="a" style="left:463px;top:0px;width:1px;height:17px;background:#d9d9d9"></div>
<div class="a" style="left:602px;top:0px;width:1px;height:17px;background:#d9d9d9"></div>
<div class="a" style="left:676px;top:0px;width:1px;height:17px;background:#d9d9d9"></div>
<div class="a" style="left:749px;top:0px;width:1px;height:17px;background:#d9d9d9"></div>
<div class="a" style="left:856px;top:0px;width:1px;height:17px;background:#d9d9d9"></div>
<div class="a" style="left:1062px;top:0px;width:1px;height:17px;background:#d9d9d9"></div>
<div class="a" style="left:1090px;top:0px;width:1px;height:17px;background:#d9d9d9"></div>
<div class="a" style="left:1144px;top:0px;width:1px;height:17px;background:#d9d9d9"></div>
<div class="a" style="left:1198px;top:0px;width:1px;height:17px;background:#d9d9d9"></div>
<div class="a" style="left:1272px;top:0px;width:1px;height:17px;background:#d9d9d9"></div>
<div class="a" style="left:1338px;top:0px;width:1px;height:17px;background:#d9d9d9"></div>
<div class="a" style="left:1411px;top:0px;width:1px;height:17px;background:#d9d9d9"></div>
<div class="a" style="left:1485px;top:0px;width:1px;height:17px;background:#d9d9d9"></div>
<div class="a" style="left:1546px;top:0px;width:1px;height:17px;background:#d9d9d9"></div>
<div class="a" style="left:1612px;top:0px;width:1px;height:17px;background:#d9d9d9"></div>
<div class="a" style="left:0;top:17px;width:1612px;height:17px;border-bottom:1px solid #d9d9d9;"></div>
<div class="a cb" style="left:10px;top:18px"><svg width="9" height="9" viewBox="0 0 9 9" style="position:absolute;left:0px;top:0px;overflow:visible"><path d="M1.1 3.7 L3.6 6.7 L7.9 1.9" stroke="#000" stroke-width="2" fill="none"/></svg></div>
<div class="a cb" style="left:41px;top:18px"><svg width="9" height="9" viewBox="0 0 9 9" style="position:absolute;left:0px;top:0px;overflow:visible"><path d="M1.1 3.7 L3.6 6.7 L7.9 1.9" stroke="#000" stroke-width="2" fill="none"/></svg></div>
<div class="a c" style="left:63px;top:17px;width:54px;height:16px;text-align:left;color:#1e1e1e">18214</div>
<div class="a c" style="left:117px;top:17px;width:27px;height:16px;text-align:left;color:#a9a9a9">Не определено</div>
<div class="a c" style="left:144px;top:17px;width:51px;height:16px;text-align:left;color:#1e1e1e">01.08.19</div>
<div class="a c" style="left:195px;top:17px;width:52px;height:16px;text-align:left;color:#1e1e1e">20:00:49</div>
<div class="a c" style="left:247px;top:17px;width:140px;height:16px;text-align:left;color:#1e1e1e">ВОЛКОВЫССКИЙ МЯСОКОМБИНАТ ОАО</div>
<div class="a c" style="left:387px;top:17px;width:76px;height:16px;text-align:left;color:#1e1e1e">Склад ВОЛКОВЫССКИЙ</div>
<div class="a c" style="left:463px;top:17px;width:139px;height:16px;text-align:left;color:#1e1e1e">ООО &quot;ЛюксСофтОпт&quot;</div>
<div class="a c" style="left:602px;top:17px;width:74px;height:16px;text-align:left;color:#1e1e1e">Магазин 5</div>
<div class="a c" style="left:676px;top:17px;width:73px;height:16px;text-align:left;color:#1e1e1e">23235</div>
<div class="a c" style="left:749px;top:17px;width:107px;height:16px;text-align:left;color:#1e1e1e">4811219028220</div>
<div class="a c" style="left:856px;top:17px;width:206px;height:16px;text-align:left;color:#1e1e1e">ПЕЛЬМЕНИ СИБИРСКИЕ ОСОБЫЕ РБ 450Г</div>
<div class="a c" style="left:1062px;top:17px;width:28px;height:16px;text-align:left;color:#1e1e1e">шт.</div>
<div class="a c" style="left:1090px;top:17px;width:54px;height:16px;text-align:right;color:#1e1e1e">90</div>
<div class="a c" style="left:1144px;top:17px;width:54px;height:16px;text-align:right;color:#1e1e1e">60</div>
<div class="a c" style="left:1198px;top:17px;width:74px;height:16px;text-align:right;color:#1e1e1e">66,666666666</div>
<div class="a c" style="left:1272px;top:17px;width:66px;height:16px;text-align:right;color:#1e1e1e">146,7</div>
<div class="a c" style="left:1338px;top:17px;width:73px;height:16px;text-align:right;color:#1e1e1e">97,8</div>
<div class="a c" style="left:1411px;top:17px;width:74px;height:16px;text-align:right;color:#1e1e1e">66,666666666</div>
<div class="a c" style="left:1485px;top:17px;width:61px;height:16px;text-align:right;color:#1e1e1e">14,67</div>
<div class="a c" style="left:1546px;top:17px;width:66px;height:16px;text-align:right;color:#1e1e1e">161,37</div>
<div class="a" style="left:31px;top:17px;width:1px;height:17px;background:#d9d9d9"></div>
<div class="a" style="left:63px;top:17px;width:1px;height:17px;background:#d9d9d9"></div>
<div class="a" style="left:117px;top:17px;width:1px;height:17px;background:#d9d9d9"></div>
<div class="a" style="left:144px;top:17px;width:1px;height:17px;background:#d9d9d9"></div>
<div class="a" style="left:195px;top:17px;width:1px;height:17px;background:#d9d9d9"></div>
<div class="a" style="left:247px;top:17px;width:1px;height:17px;background:#d9d9d9"></div>
<div class="a" style="left:387px;top:17px;width:1px;height:17px;background:#d9d9d9"></div>
<div class="a" style="left:463px;top:17px;width:1px;height:17px;background:#d9d9d9"></div>
<div class="a" style="left:602px;top:17px;width:1px;height:17px;background:#d9d9d9"></div>
<div class="a" style="left:676px;top:17px;width:1px;height:17px;background:#d9d9d9"></div>
<div class="a" style="left:749px;top:17px;width:1px;height:17px;background:#d9d9d9"></div>
<div class="a" style="left:856px;top:17px;width:1px;height:17px;background:#d9d9d9"></div>
<div class="a" style="left:1062px;top:17px;width:1px;height:17px;background:#d9d9d9"></div>
<div class="a" style="left:1090px;top:17px;width:1px;height:17px;background:#d9d9d9"></div>
<div class="a" style="left:1144px;top:17px;width:1px;height:17px;background:#d9d9d9"></div>
<div class="a" style="left:1198px;top:17px;width:1px;height:17px;background:#d9d9d9"></div>
<div class="a" style="left:1272px;top:17px;width:1px;height:17px;background:#d9d9d9"></div>
<div class="a" style="left:1338px;top:17px;width:1px;height:17px;background:#d9d9d9"></div>
<div class="a" style="left:1411px;top:17px;width:1px;height:17px;background:#d9d9d9"></div>
<div class="a" style="left:1485px;top:17px;width:1px;height:17px;background:#d9d9d9"></div>
<div class="a" style="left:1546px;top:17px;width:1px;height:17px;background:#d9d9d9"></div>
<div class="a" style="left:1612px;top:17px;width:1px;height:17px;background:#d9d9d9"></div>
<div class="a" style="left:0;top:34px;width:1612px;height:17px;border-bottom:1px solid #d9d9d9;"></div>
<div class="a cb" style="left:10px;top:35px"><svg width="9" height="9" viewBox="0 0 9 9" style="position:absolute;left:0px;top:0px;overflow:visible"><path d="M1.1 3.7 L3.6 6.7 L7.9 1.9" stroke="#000" stroke-width="2" fill="none"/></svg></div>
<div class="a cb" style="left:41px;top:35px"><svg width="9" height="9" viewBox="0 0 9 9" style="position:absolute;left:0px;top:0px;overflow:visible"><path d="M1.1 3.7 L3.6 6.7 L7.9 1.9" stroke="#000" stroke-width="2" fill="none"/></svg></div>
<div class="a c" style="left:63px;top:34px;width:54px;height:16px;text-align:left;color:#1e1e1e">18214</div>
<div class="a c" style="left:117px;top:34px;width:27px;height:16px;text-align:left;color:#a9a9a9">Не определено</div>
<div class="a c" style="left:144px;top:34px;width:51px;height:16px;text-align:left;color:#1e1e1e">01.08.19</div>
<div class="a c" style="left:195px;top:34px;width:52px;height:16px;text-align:left;color:#1e1e1e">20:00:49</div>
<div class="a c" style="left:247px;top:34px;width:140px;height:16px;text-align:left;color:#1e1e1e">ВОЛКОВЫССКИЙ МЯСОКОМБИНАТ ОАО</div>
<div class="a c" style="left:387px;top:34px;width:76px;height:16px;text-align:left;color:#1e1e1e">Склад ВОЛКОВЫССКИЙ</div>
<div class="a c" style="left:463px;top:34px;width:139px;height:16px;text-align:left;color:#1e1e1e">ООО &quot;ЛюксСофтОпт&quot;</div>
<div class="a c" style="left:602px;top:34px;width:74px;height:16px;text-align:left;color:#1e1e1e">Магазин 5</div>
<div class="a c" style="left:676px;top:34px;width:73px;height:16px;text-align:left;color:#1e1e1e">23180</div>
<div class="a c" style="left:749px;top:34px;width:107px;height:16px;text-align:left;color:#1e1e1e">4811219028244</div>
<div class="a c" style="left:856px;top:34px;width:206px;height:16px;text-align:left;color:#1e1e1e">ПЕЛЬМЕНИ КОРОЛЕВСКИЕ ОСОБЫЕ 450Г</div>
<div class="a c" style="left:1062px;top:34px;width:28px;height:16px;text-align:left;color:#1e1e1e">шт.</div>
<div class="a c" style="left:1090px;top:34px;width:54px;height:16px;text-align:right;color:#1e1e1e">90</div>
<div class="a c" style="left:1144px;top:34px;width:54px;height:16px;text-align:right;color:#1e1e1e">90</div>
<div class="a c" style="left:1198px;top:34px;width:74px;height:16px;text-align:right;color:#1e1e1e">100</div>
<div class="a c" style="left:1272px;top:34px;width:66px;height:16px;text-align:right;color:#1e1e1e">141,3</div>
<div class="a c" style="left:1338px;top:34px;width:73px;height:16px;text-align:right;color:#1e1e1e">141,3</div>
<div class="a c" style="left:1411px;top:34px;width:74px;height:16px;text-align:right;color:#1e1e1e">100</div>
<div class="a c" style="left:1485px;top:34px;width:61px;height:16px;text-align:right;color:#1e1e1e">14,13</div>
<div class="a c" style="left:1546px;top:34px;width:66px;height:16px;text-align:right;color:#1e1e1e">155,43</div>
<div class="a" style="left:31px;top:34px;width:1px;height:17px;background:#d9d9d9"></div>
<div class="a" style="left:63px;top:34px;width:1px;height:17px;background:#d9d9d9"></div>
<div class="a" style="left:117px;top:34px;width:1px;height:17px;background:#d9d9d9"></div>
<div class="a" style="left:144px;top:34px;width:1px;height:17px;background:#d9d9d9"></div>
<div class="a" style="left:195px;top:34px;width:1px;height:17px;background:#d9d9d9"></div>
<div class="a" style="left:247px;top:34px;width:1px;height:17px;background:#d9d9d9"></div>
<div class="a" style="left:387px;top:34px;width:1px;height:17px;background:#d9d9d9"></div>
<div class="a" style="left:463px;top:34px;width:1px;height:17px;background:#d9d9d9"></div>
<div class="a" style="left:602px;top:34px;width:1px;height:17px;background:#d9d9d9"></div>
<div class="a" style="left:676px;top:34px;width:1px;height:17px;background:#d9d9d9"></div>
<div class="a" style="left:749px;top:34px;width:1px;height:17px;background:#d9d9d9"></div>
<div class="a" style="left:856px;top:34px;width:1px;height:17px;background:#d9d9d9"></div>
<div class="a" style="left:1062px;top:34px;width:1px;height:17px;background:#d9d9d9"></div>
<div class="a" style="left:1090px;top:34px;width:1px;height:17px;background:#d9d9d9"></div>
<div class="a" style="left:1144px;top:34px;width:1px;height:17px;background:#d9d9d9"></div>
<div class="a" style="left:1198px;top:34px;width:1px;height:17px;background:#d9d9d9"></div>
<div class="a" style="left:1272px;top:34px;width:1px;height:17px;background:#d9d9d9"></div>
<div class="a" style="left:1338px;top:34px;width:1px;height:17px;background:#d9d9d9"></div>
<div class="a" style="left:1411px;top:34px;width:1px;height:17px;background:#d9d9d9"></div>
<div class="a" style="left:1485px;top:34px;width:1px;height:17px;background:#d9d9d9"></div>
<div class="a" style="left:1546px;top:34px;width:1px;height:17px;background:#d9d9d9"></div>
<div class="a" style="left:1612px;top:34px;width:1px;height:17px;background:#d9d9d9"></div>
</div>
<div class="a" style="left:18px;top:556px;width:1614px;height:2px;background:#5c5c5c"></div>
<div class="a tb" style="left:19px;top:859px"><svg width="19" height="20" viewBox="0 0 19 20"><path d="M3 4 H14 L9.9 8.3 V11.6 H7.1 V8.3 Z" fill="#333"/><path d="M5.6 5.2 H11.4 L9 7.6 V10.2 H8 V7.6 Z" fill="#c9d6d6"/><path d="M12.5 11 V15.9 M10 13.4 H15" stroke="#444" stroke-width="1.2"/></svg></div>
<div class="a tb" style="left:48px;top:859px"><svg width="19" height="20" viewBox="0 0 19 20"><rect x="2.8" y="2.8" width="14.2" height="13.2" fill="#fff" stroke="#8a8a8a" stroke-width="1.3"/><rect x="4.2" y="4.2" width="11.6" height="10.6" fill="#c8c8c8"/><g fill="#f4f4f4"><rect x="5" y="6" width="1.6" height="1.2"/><rect x="7.2" y="6" width="1.8" height="1.2"/><rect x="10" y="6" width="1.8" height="1.2"/><rect x="12.6" y="6" width="2.4" height="1.2"/><rect x="5" y="8" width="1.6" height="1.2"/><rect x="7.2" y="8" width="1.8" height="1.2"/><rect x="10" y="8" width="1.8" height="1.2"/><rect x="12.6" y="8" width="2.4" height="1.2"/><rect x="5" y="10" width="1.6" height="1.2"/><rect x="7.2" y="10" width="1.8" height="1.2"/><rect x="10" y="10" width="1.8" height="1.2"/><rect x="12.6" y="10" width="2.4" height="1.2"/><rect x="5" y="12" width="1.6" height="1.2"/><rect x="7.2" y="12" width="1.8" height="1.2"/><rect x="10" y="12" width="1.8" height="1.2"/><rect x="12.6" y="12" width="2.4" height="1.2"/></g><rect x="9.6" y="4.3" width="2.8" height="10.4" fill="none" stroke="#444" stroke-width="0.9"/></svg></div>
<div class="a tb" style="left:72px;top:859px"><svg width="19" height="20" viewBox="0 0 19 20"><path d="M3.4 4 L4.6 3.2 V6.6 M3.2 6.6 H5.9" stroke="#222" stroke-width="1.1" fill="none"/><path d="M3 8.6 Q4.5 7.6 5.6 8.6 Q5.8 9.8 3.2 11.5 H5.9" stroke="#222" stroke-width="1.1" fill="none"/><path d="M3 13.5 H5.6 L4.2 14.8 Q6 15 5.7 16.2 Q4.6 17.4 3 16.5" stroke="#222" stroke-width="1.1" fill="none"/><path d="M8.2 4.6 H17 M8.2 9.6 H17 M8.2 14.6 H17" stroke="#222" stroke-width="1.2"/></svg></div>
<div class="a tb" style="left:96px;top:859px"><svg width="19" height="20" viewBox="0 0 19 20"><rect x="4.5" y="2.6" width="10" height="14.8" fill="#ececec" stroke="#6a6a6a" stroke-width="1"/><rect x="4.5" y="4" width="10" height="3.4" fill="#555"/><rect x="5.5" y="5" width="7.5" height="1.6" fill="#9a9a9a"/><g fill="#8a8a8a"><rect x="5.9" y="9" width="1.2" height="1.2"/><rect x="7.9" y="9" width="1.2" height="1.2"/><rect x="9.9" y="9" width="1.2" height="1.2"/><rect x="11.9" y="9" width="1.2" height="1.2"/><rect x="5.9" y="11" width="1.2" height="1.2"/><rect x="7.9" y="11" width="1.2" height="1.2"/><rect x="9.9" y="11" width="1.2" height="1.2"/><rect x="5.9" y="13" width="1.2" height="1.2"/><rect x="7.9" y="13" width="1.2" height="1.2"/><rect x="5.9" y="15" width="1.2" height="1.2"/><rect x="7.9" y="15" width="1.2" height="1.2"/></g><path d="M14.5 10.8 V17.8 M11 14.3 H18" stroke="#444" stroke-width="3.4"/><path d="M14.5 11.5 V17.1 M11.7 14.3 H17.3" stroke="#7a7a7a" stroke-width="1.8"/></svg></div>
<div class="a tb" style="left:125px;top:859px"><svg width="19" height="20" viewBox="0 0 19 20"><path d="M2.6 9 Q2.6 7.6 4 7.6 H15 Q16.4 7.6 16.4 9 V15.6 Q16.4 16.8 15 16.8 H4 Q2.6 16.8 2.6 15.6 Z" fill="#9a9a9a" stroke="#333" stroke-width="1"/><path d="M6 9 L8.3 3.2 H15.8 L13.4 9 Z" fill="#f4f4f4" stroke="#555" stroke-width="0.9"/><path d="M9.3 5.3 H13 M8.6 7 H12.2" stroke="#888" stroke-width="0.8"/><rect x="3.5" y="11.2" width="9.5" height="3.8" fill="#f2f2f2"/><path d="M3.2 16.4 H15.8" stroke="#222" stroke-width="1.2"/></svg></div>
<div class="a tb" style="left:149px;top:859px"><svg width="19" height="20" viewBox="0 0 19 20"><rect x="3.4" y="3.4" width="14" height="13.2" fill="#eeeeee" stroke="#6e6e6e" stroke-width="1.4"/><rect x="4.1" y="4.1" width="12.6" height="1.2" fill="#9a9a9a"/><path d="M6.3 7.4 L15.4 13.4" stroke="#666" stroke-width="2"/><path d="M14.8 7.3 L6.6 12.8" stroke="#777" stroke-width="1.4"/><path d="M7.5 8.2 H13.5 M6.5 12.4 H11.5" stroke="#999" stroke-width="0.8"/><rect x="4.1" y="14.6" width="12.6" height="1.3" fill="#fff"/></svg></div>
<div class="a tb" style="left:178px;top:859px"><svg width="19" height="20" viewBox="0 0 19 20"><rect x="3.7" y="3.6" width="13" height="13.2" fill="#fff" stroke="#000" stroke-width="1.5"/><rect x="4.5" y="4.4" width="11.5" height="5" fill="#d8d8d8"/><rect x="8" y="4.4" width="4.4" height="11.8" fill="#cfcfcf"/><path d="M7.6 4.4 V16.2 M12.5 4.4 V16.2" stroke="#777" stroke-width="0.9"/><path d="M4.5 9.6 H16" stroke="#eee" stroke-width="0.8"/><rect x="11" y="11" width="7" height="7" fill="#fff"/><path d="M12.2 12.2 L16.8 16.8 M16.8 12.2 L12.2 16.8" stroke="#8a8a8a" stroke-width="3.4" stroke-linecap="round"/><path d="M12.3 12.3 L16.7 16.7 M16.7 12.3 L12.3 16.7" stroke="#fff" stroke-width="1.8"/></svg></div>
<div class="a btn1" style="left:1418px;top:861px;width:107px;height:16px">Заполнить данные</div>
<div class="a btn2" style="left:1529px;top:861px;width:100px;height:16px"><svg width="16" height="16" viewBox="0 0 16 16" style="position:absolute;left:4px;top:-1px"><path d="M2.4 12.6 L11 3.4" stroke="#d2b264" stroke-width="2"/><path d="M2.8 12.2 L10.6 3.8" stroke="#ead592" stroke-width="0.7"/><path d="M10.6 3.8 L11.8 2.6" stroke="#7a7a7a" stroke-width="2.2" stroke-linecap="round"/><path d="M1.8 13.2 L2.5 12.5" stroke="#444" stroke-width="1.6" stroke-linecap="round"/></svg><span style="position:absolute;left:20px;top:1px">Редактировать</span></div>
<svg class="a" style="left:0;top:0" width="1642" height="887" viewBox="0 0 1642 887">
<g stroke="#c9232e" stroke-width="2.2" fill="none" stroke-linecap="round">
<path d="M488.3 777.4 L410.6 257"/>
<path d="M566.7 769.2 L830.3 257"/>
<path d="M606 766 L1559 326"/>
<path d="M1231 868 L1395 866"/>
</g>
<g fill="#e81c24">
<polygon points="409,243 404,259 418,256"/>
<polygon points="837,244 824,254 837,261"/>
<polygon points="1557,320 1574,320 1563,331"/>
<polygon points="1392,861 1407,866 1392,873"/>
</g>
</svg>
<div class="a t" style="left:512px;top:790.7px;font-size:11.7px;font-weight:bold;color:#c02a36;transform:scaleX(1.144);transform-origin:0 0;-webkit-text-stroke:0">Выбрать необходимое , нажать</div>
<div class="a t" style="left:512px;top:803.7px;font-size:11.7px;font-weight:bold;color:#c02a36;transform:scaleX(1.144);transform-origin:0 0;-webkit-text-stroke:0">&quot;Заполнить данные&quot;</div>
</body></html>
